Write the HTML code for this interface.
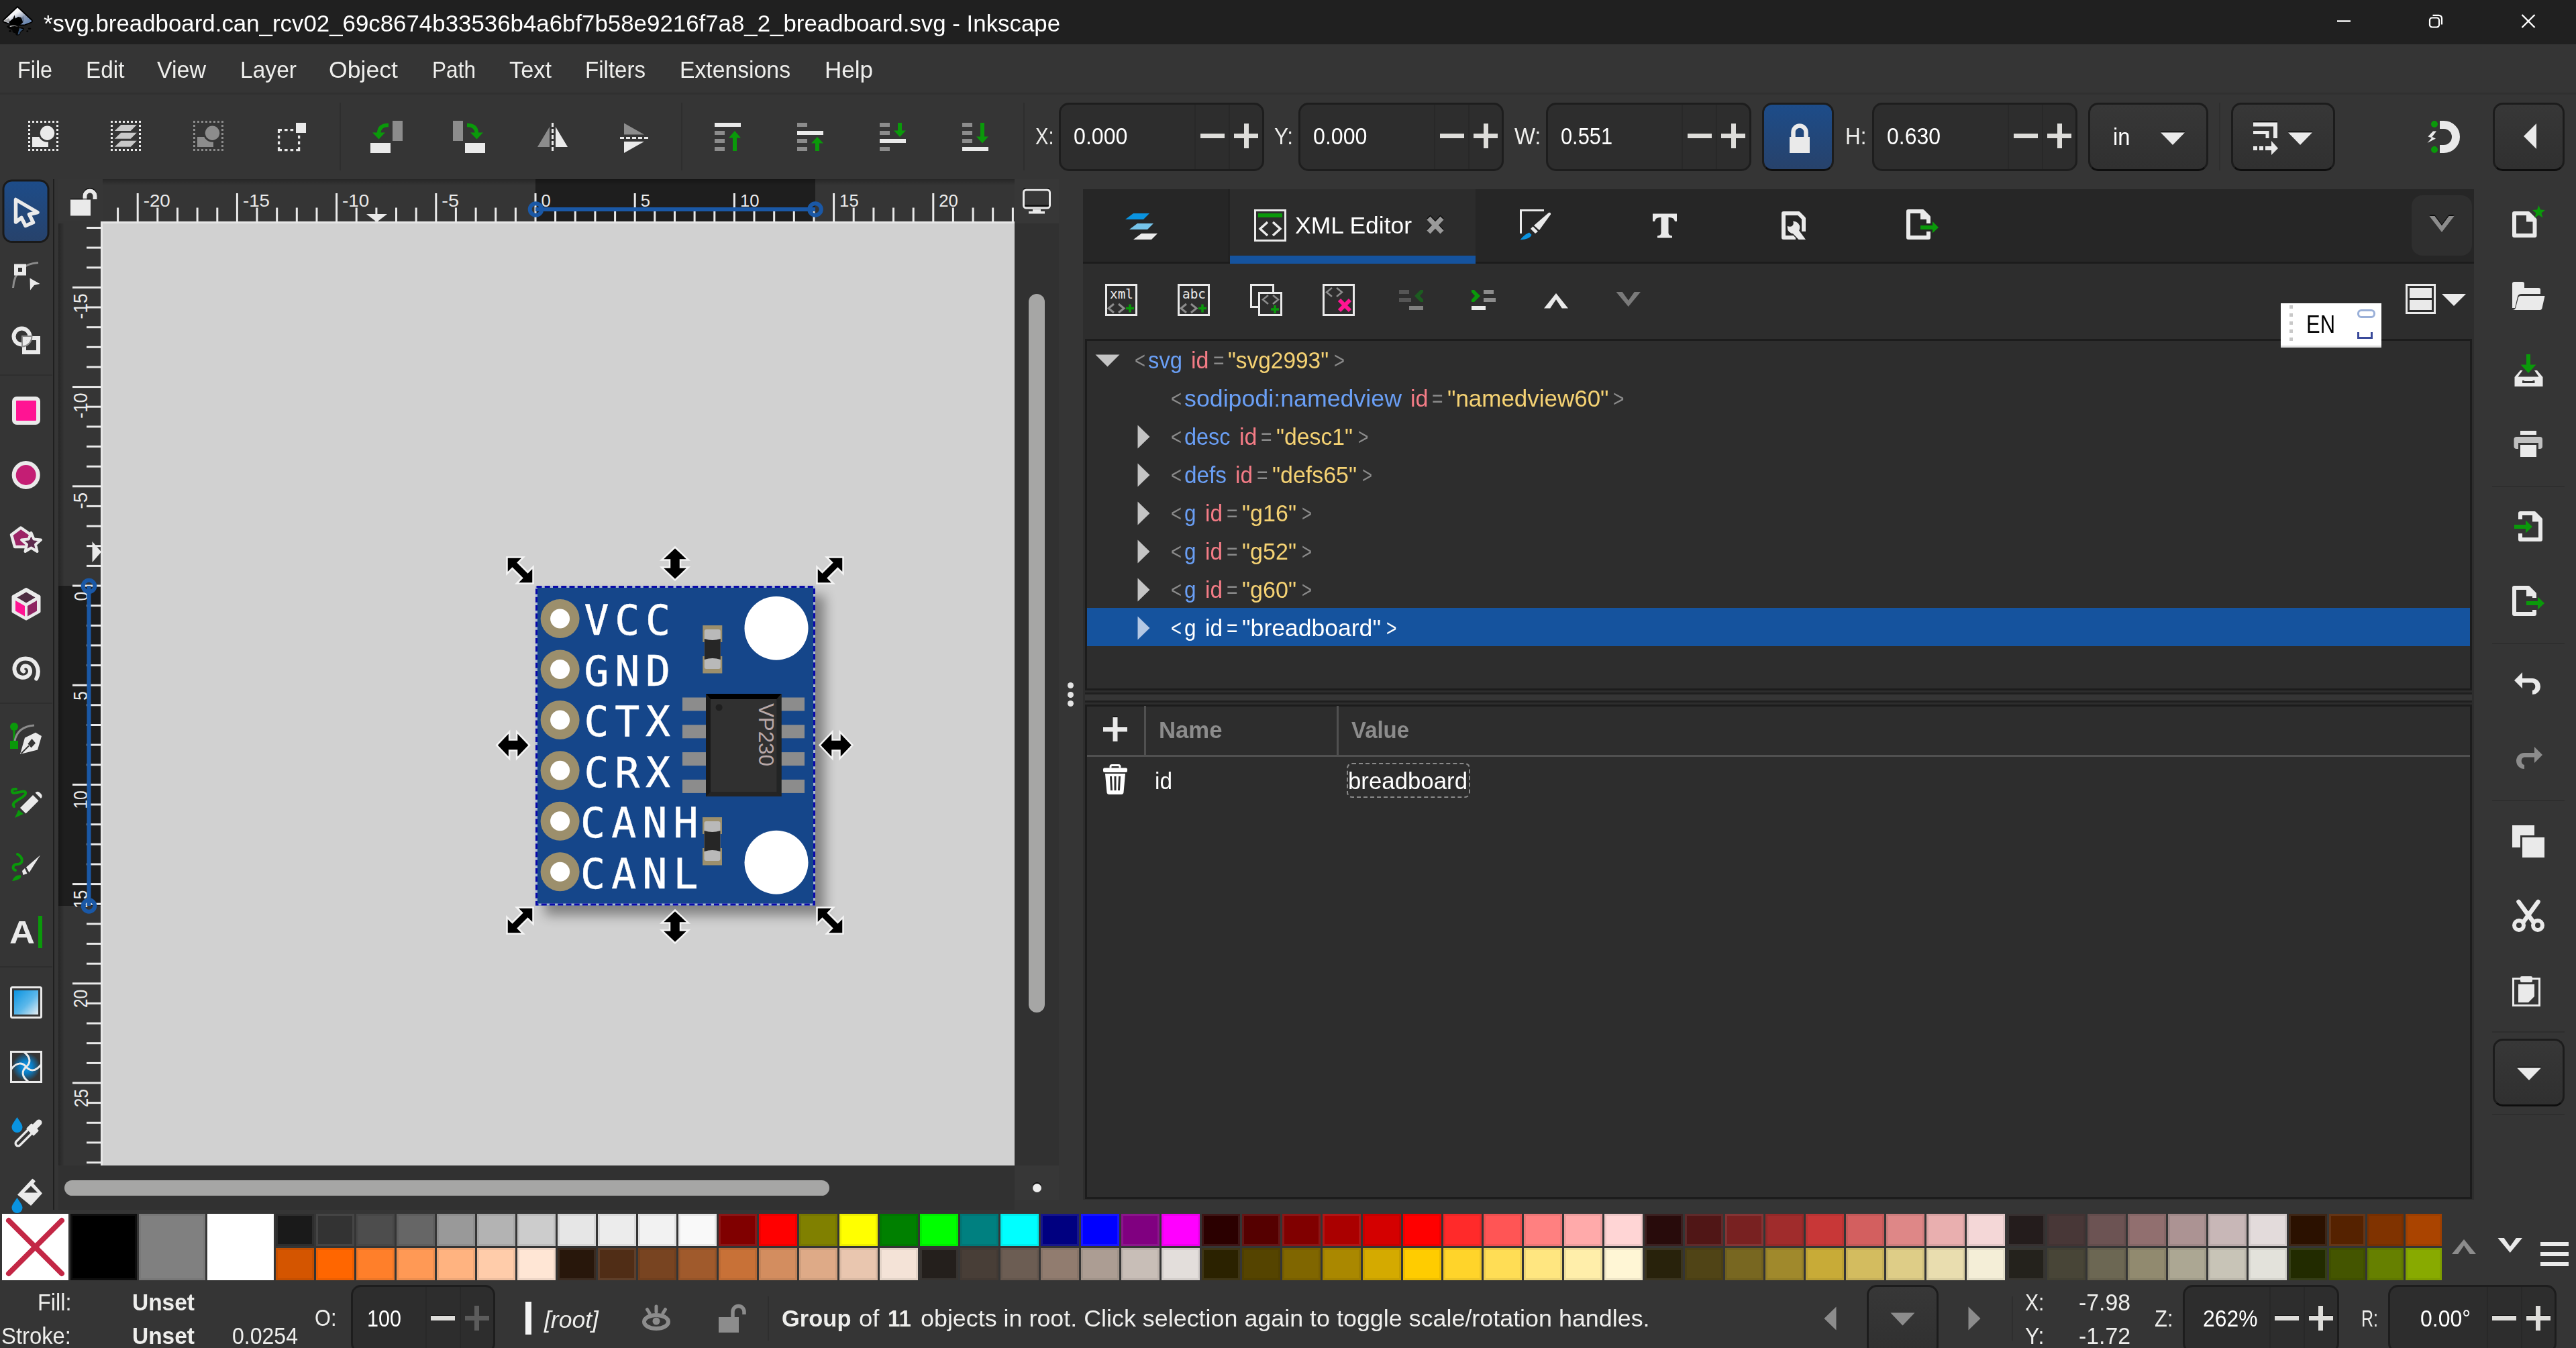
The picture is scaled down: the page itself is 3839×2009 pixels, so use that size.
<!DOCTYPE html>
<html lang="en"><head><meta charset="utf-8"><title>Inkscape</title>
<style>
html,body{margin:0;padding:0;background:#353535;}
#root{position:relative;width:3839px;height:2009px;overflow:hidden;background:#353535;font-family:"Liberation Sans",sans-serif;}
#root div,#root svg,#root span.t{position:absolute;}
#root div{box-sizing:content-box;}
span.t{white-space:pre;line-height:1;transform-origin:0 0;display:block;}
svg{overflow:visible;display:block;}
svg text{font-family:"Liberation Sans",sans-serif;}
svg text.dm{font-family:"DejaVu Sans Mono",monospace;}
</style></head>
<body>
<div id="root">
<div class="window-title" style="left:0;top:0;width:0;height:0;">
<div class="titlebar" style="left:0px;top:0px;width:3839px;height:66px;background:#202020;"><span class="t" style="left:65px;top:17.4px;font-size:35px;color:#ffffff;transform:scaleX(0.9956);">*svg.breadboard.can_rcv02_69c8674b33536b4a6bf7b58e9216f7a8_2_breadboard.svg - Inkscape</span><svg style="left:0px;top:0px;" width="66" height="66" viewBox="0 0 66 66"><defs><linearGradient id="lg1" x1="0.2" y1="0.1" x2="0.9" y2="0.8"><stop offset="0" stop-color="#ffffff"/><stop offset=".35" stop-color="#f4f4f6"/><stop offset=".7" stop-color="#8c9ab4"/><stop offset="1" stop-color="#6a88b4"/></linearGradient><linearGradient id="lg2" x1="0" y1="0" x2="1" y2="0"><stop offset="0" stop-color="#9a9a9a"/><stop offset="1" stop-color="#3a3a3a"/></linearGradient></defs><path d="M26 10 5 30Q3.500 31.800 6 32.800L19 37.500H36L46.500 33.500Q49 32 47.500 30z" fill="url(#lg1)" stroke="#000" stroke-width="1.800" stroke-linejoin="round"/><path d="M5.500 31 13 27 16 33 6.500 32.500z" fill="#8a8a8a" opacity=".7"/><path d="M13 33 19.500 27.500 21.500 22.500 23 27.500 27 25 31.500 26 33 29.500 34.500 33 31 36.500 27 38H17z" fill="#000"/><path d="M33 27 34.500 23 36 31 34 34z" fill="#5a6a86" opacity=".8"/><path d="M10 39.500Q14 36.500 22 37.200 28.500 38 28.500 41 32.500 40 35.500 42 37.500 44.500 33.500 46.300 30 47.500 30.500 49.500 30 52.300 26 52.800 22.800 52.300 23 49.200 19.500 49 18.500 47.500 19.500 45 16 44 12 42.500 10 39.500z" fill="#050505"/><path d="M14 39Q19 37 27 39.500 20 38.500 15.500 40z" fill="#c8c8c8"/><path d="M29 42 35 43.500 31.500 46 29.500 48.500 29 51 26.500 51.500 27.500 47z" fill="#3c5c84" opacity=".9"/><ellipse cx="15" cy="46.500" rx="2" ry="1.400" fill="#050505"/><ellipse cx="40.800" cy="46.600" rx="1.500" ry="1.300" fill="#050505"/><ellipse cx="44" cy="42.800" rx="2.400" ry="1.400" fill="#050505"/></svg><svg style="left:3470px;top:10px;" width="330" height="46" viewBox="0 0 330 46"><path d="M13 21.5H33" stroke="#fff" stroke-width="2.4" fill="none"/><rect x="151" y="16.5" width="14" height="14" rx="3.5" fill="none" stroke="#fff" stroke-width="2.2"/><path d="M155.5 12.8H164.5a4.5 4.5 0 0 1 4.5 4.5V26.5" fill="none" stroke="#fff" stroke-width="2.2"/><path d="M288.5 12L307.5 31M307.5 12L288.5 31" stroke="#fff" stroke-width="2.4" fill="none"/></svg></div>
</div>
<div class="menu" style="left:0;top:0;width:0;height:0;">
<div class="menubar" style="left:0px;top:66px;width:3839px;height:73px;background:#353535;"><span class="t" style="left:26px;top:20.4px;font-size:35px;color:#eeeeec;transform:scaleX(0.9219);">File</span><span class="t" style="left:128px;top:20.4px;font-size:35px;color:#eeeeec;transform:scaleX(0.9534);">Edit</span><span class="t" style="left:234px;top:20.4px;font-size:35px;color:#eeeeec;transform:scaleX(0.9703);">View</span><span class="t" style="left:358px;top:20.4px;font-size:35px;color:#eeeeec;transform:scaleX(0.9593);">Layer</span><span class="t" style="left:490px;top:20.4px;font-size:35px;color:#eeeeec;transform:scaleX(1.0182);">Object</span><span class="t" style="left:644px;top:20.4px;font-size:35px;color:#eeeeec;transform:scaleX(0.9028);">Path</span><span class="t" style="left:759px;top:20.4px;font-size:35px;color:#eeeeec;transform:scaleX(0.9813);">Text</span><span class="t" style="left:872px;top:20.4px;font-size:35px;color:#eeeeec;transform:scaleX(0.9446);">Filters</span><span class="t" style="left:1013px;top:20.4px;font-size:35px;color:#eeeeec;transform:scaleX(0.9637);">Extensions</span><span class="t" style="left:1229px;top:20.4px;font-size:35px;color:#eeeeec;transform:scaleX(1.0002);">Help</span></div>
<div style="left:0px;top:138px;width:3839px;height:3px;background:#303030;"></div>
</div>
<div class="tool-controls" style="left:0;top:0;width:0;height:0;">
<div style="left:506px;top:153px;width:2px;height:101px;background:#2e2e2e;"></div>
<div style="left:1015px;top:153px;width:2px;height:101px;background:#2e2e2e;"></div>
<div style="left:1525px;top:153px;width:2px;height:101px;background:#2e2e2e;"></div>
<div style="left:3307px;top:153px;width:2px;height:101px;background:#2e2e2e;"></div>
<span class="t" style="left:1542.5px;top:184.9px;font-size:35px;color:#eeeeec;transform:scaleX(0.8314);">X:</span>
<div class="spin" style="left:1578px;top:153px;width:300px;height:96px;background:#2d2d2d;border:3px solid #1d1d1d;border-radius:15px;overflow:hidden;"><span class="t" style="left:18.5px;top:28.9px;font-size:35px;color:#ffffff;transform:scaleX(0.9190);">0.000</span><div style="left:199px;top:0px;width:2px;height:96px;background:#282828;"></div><div style="left:250px;top:0px;width:2px;height:96px;background:#282828;"></div><div style="left:207.5px;top:41.5px;width:36px;height:1.5px;background:#0c0c0c;"></div><div style="left:207.5px;top:43.0px;width:36px;height:7px;background:#deddda;"></div><div style="left:272.5px;top:26.5px;width:7px;height:1.5px;background:#0c0c0c;"></div><div style="left:258px;top:41.5px;width:14.5px;height:1.5px;background:#0c0c0c;"></div><div style="left:279.5px;top:41.5px;width:14.5px;height:1.5px;background:#0c0c0c;"></div><div style="left:258px;top:43.0px;width:36px;height:7px;background:#deddda;"></div><div style="left:272.5px;top:28.0px;width:7px;height:37px;background:#deddda;"></div></div>
<span class="t" style="left:1899px;top:184.9px;font-size:35px;color:#eeeeec;transform:scaleX(0.8991);">Y:</span>
<div class="spin" style="left:1935px;top:153px;width:300px;height:96px;background:#2d2d2d;border:3px solid #1d1d1d;border-radius:15px;overflow:hidden;"><span class="t" style="left:18.5px;top:28.9px;font-size:35px;color:#ffffff;transform:scaleX(0.9190);">0.000</span><div style="left:199px;top:0px;width:2px;height:96px;background:#282828;"></div><div style="left:250px;top:0px;width:2px;height:96px;background:#282828;"></div><div style="left:207.5px;top:41.5px;width:36px;height:1.5px;background:#0c0c0c;"></div><div style="left:207.5px;top:43.0px;width:36px;height:7px;background:#deddda;"></div><div style="left:272.5px;top:26.5px;width:7px;height:1.5px;background:#0c0c0c;"></div><div style="left:258px;top:41.5px;width:14.5px;height:1.5px;background:#0c0c0c;"></div><div style="left:279.5px;top:41.5px;width:14.5px;height:1.5px;background:#0c0c0c;"></div><div style="left:258px;top:43.0px;width:36px;height:7px;background:#deddda;"></div><div style="left:272.5px;top:28.0px;width:7px;height:37px;background:#deddda;"></div></div>
<span class="t" style="left:2256.5px;top:184.9px;font-size:35px;color:#eeeeec;transform:scaleX(0.9373);">W:</span>
<div class="spin" style="left:2304px;top:153px;width:300px;height:96px;background:#2d2d2d;border:3px solid #1d1d1d;border-radius:15px;overflow:hidden;"><span class="t" style="left:19px;top:28.9px;font-size:35px;color:#ffffff;transform:scaleX(0.8791);">0.551</span><div style="left:199px;top:0px;width:2px;height:96px;background:#282828;"></div><div style="left:250px;top:0px;width:2px;height:96px;background:#282828;"></div><div style="left:207.5px;top:41.5px;width:36px;height:1.5px;background:#0c0c0c;"></div><div style="left:207.5px;top:43.0px;width:36px;height:7px;background:#deddda;"></div><div style="left:272.5px;top:26.5px;width:7px;height:1.5px;background:#0c0c0c;"></div><div style="left:258px;top:41.5px;width:14.5px;height:1.5px;background:#0c0c0c;"></div><div style="left:279.5px;top:41.5px;width:14.5px;height:1.5px;background:#0c0c0c;"></div><div style="left:258px;top:43.0px;width:36px;height:7px;background:#deddda;"></div><div style="left:272.5px;top:28.0px;width:7px;height:37px;background:#deddda;"></div></div>
<div class="btn" style="left:2625.5px;top:153px;width:101.5px;height:96px;background:linear-gradient(#1d4c89,#27426b);border:3px solid #1c1c1c;border-bottom-color:#0e0e0e;border-radius:15px;"><svg style="left:35px;top:27px;" width="36" height="48" viewBox="0 0 36 48"><path d="M8.5 21V14a9.5 9.5 0 0 1 19 0V21" fill="none" stroke="#eaeaea" stroke-width="6.5"/><rect x="3" y="21" width="30" height="24" fill="#eaeaea"/></svg></div>
<span class="t" style="left:2750px;top:184.9px;font-size:35px;color:#eeeeec;transform:scaleX(0.9000);">H:</span>
<div class="spin" style="left:2790px;top:153px;width:300px;height:96px;background:#2d2d2d;border:3px solid #1d1d1d;border-radius:15px;overflow:hidden;"><span class="t" style="left:19px;top:28.9px;font-size:35px;color:#ffffff;transform:scaleX(0.9133);">0.630</span><div style="left:199px;top:0px;width:2px;height:96px;background:#282828;"></div><div style="left:250px;top:0px;width:2px;height:96px;background:#282828;"></div><div style="left:207.5px;top:41.5px;width:36px;height:1.5px;background:#0c0c0c;"></div><div style="left:207.5px;top:43.0px;width:36px;height:7px;background:#deddda;"></div><div style="left:272.5px;top:26.5px;width:7px;height:1.5px;background:#0c0c0c;"></div><div style="left:258px;top:41.5px;width:14.5px;height:1.5px;background:#0c0c0c;"></div><div style="left:279.5px;top:41.5px;width:14.5px;height:1.5px;background:#0c0c0c;"></div><div style="left:258px;top:43.0px;width:36px;height:7px;background:#deddda;"></div><div style="left:272.5px;top:28.0px;width:7px;height:37px;background:#deddda;"></div></div>
<div class="btn" style="left:3111.5px;top:153px;width:173px;height:96px;background:linear-gradient(#373737,#303030);border:3px solid #1c1c1c;border-bottom-color:#0e0e0e;border-radius:15px;"><span class="t" style="left:34.5px;top:29.9px;font-size:35px;color:#ffffff;transform:scaleX(0.9358);">in</span><svg style="left:104.5px;top:39px;" width="38" height="22" viewBox="0 0 38 22"><path d="M1 1.5H37" stroke="#0c0c0c" stroke-width="1.5"/><path d="M1 2.5H37L19 21z" fill="#eaeaea"/></svg></div>
<div class="btn" style="left:3324.5px;top:153px;width:149px;height:96px;background:linear-gradient(#373737,#303030);border:3px solid #1c1c1c;border-bottom-color:#0e0e0e;border-radius:15px;"><svg style="left:30px;top:24px;" width="40" height="52" viewBox="0 0 40 52"><path d="M0 1.5H36" stroke="#0c0c0c" stroke-width="1.5"/><path d="M0 5.5H33V26" fill="none" stroke="#eaeaea" stroke-width="6"/><path d="M0 17.5H21V26" fill="none" stroke="#eaeaea" stroke-width="5"/><path d="M0 41H6M9 41H15M18 41H28" stroke="#eaeaea" stroke-width="6"/><path d="M27 30 37 41 27 51z" fill="#eaeaea"/></svg><svg style="left:81px;top:39px;" width="38" height="22" viewBox="0 0 38 22"><path d="M1 1.5H37" stroke="#0c0c0c" stroke-width="1.5"/><path d="M1 2.5H37L19 21z" fill="#eaeaea"/></svg></div>
<div class="btn" style="left:3714.5px;top:153px;width:101px;height:96px;background:linear-gradient(#373737,#303030);border:3px solid #1c1c1c;border-bottom-color:#0e0e0e;border-radius:15px;"><svg style="left:42px;top:27px;" width="24" height="42" viewBox="0 0 24 42"><path d="M20 1V39L1 20z" fill="#eaeaea"/></svg></div>
<svg style="left:0;top:141px" width="3839" height="126" viewBox="0 141 3839 126"><rect x="43.5" y="181.5" width="42" height="42" fill="none" stroke="#eaeaea" stroke-width="3" stroke-dasharray="3 3" stroke-dashoffset="1.5"/><rect x="48" y="204" width="24" height="15" fill="#eaeaea"/><circle cx="70.5" cy="198.3" r="13.5" fill="#353535"/><circle cx="70.5" cy="198.3" r="10.700" fill="#eaeaea"/><rect x="166.5" y="181.5" width="42" height="42" fill="none" stroke="#eaeaea" stroke-width="3" stroke-dasharray="3 3" stroke-dashoffset="1.5"/><path d="M180.300 185.9H203.800L194.800 194.9H170.900z" fill="#c8c8c8"/><path d="M180.300 197.8H203.800L194.800 206.8H170.900z" fill="#c8c8c8"/><path d="M180.300 209.8H203.800L194.800 218.8H170.900z" fill="#c8c8c8"/><rect x="289.5" y="181.5" width="42" height="42" fill="none" stroke="#8c8c8c" stroke-width="3" stroke-dasharray="3 3" stroke-dashoffset="1.5"/><rect x="294" y="204" width="24" height="15" fill="#8c8c8c"/><circle cx="316.5" cy="198.3" r="13.5" fill="#353535"/><circle cx="316.5" cy="198.3" r="10.700" fill="#8c8c8c"/><rect x="415.600" y="193.600" width="30" height="30" fill="none" stroke="#eaeaea" stroke-width="3.300" stroke-dasharray="8.800 4 4.600 4 4.600 4" stroke-dashoffset="4.400"/><rect x="438" y="180" width="21" height="21" fill="#353535"/><rect x="441" y="183" width="15" height="15" fill="#eaeaea"/><rect x="585" y="180" width="15" height="30" fill="#8c8c8c"/><rect x="552" y="213" width="30" height="15" fill="#eaeaea"/><path d="M579 186.5Q565 186 564.5 199" fill="none" stroke="#0a990a" stroke-width="5.5"/><path d="M555 197.5H574L564.5 207.5z" fill="#0a990a"/><rect x="675" y="180" width="15" height="30" fill="#8c8c8c"/><rect x="693" y="213" width="30" height="15" fill="#eaeaea"/><path d="M696 186.5Q710 186 710.5 199" fill="none" stroke="#0a990a" stroke-width="5.5"/><path d="M701 197.5H720L710.5 207.5z" fill="#0a990a"/><path d="M801 219H819V189z" fill="#8c8c8c"/><path d="M828 189V219H846z" fill="#eaeaea"/><path d="M823.5 183V225" stroke="#eaeaea" stroke-width="3" stroke-dasharray="6 3"/><path d="M930 183.5V200.5H960z" fill="#8c8c8c"/><path d="M930 211H960L930 228z" fill="#eaeaea"/><path d="M924 205.5H966" stroke="#eaeaea" stroke-width="3" stroke-dasharray="6 3"/><rect x="1065" y="183" width="39" height="6" fill="#eaeaea"/><rect x="1065" y="195" width="15" height="6" fill="#8c8c8c"/><rect x="1065" y="207" width="15" height="6" fill="#8c8c8c"/><rect x="1065" y="219" width="15" height="6" fill="#8c8c8c"/><rect x="1092" y="203" width="6" height="22" fill="#0a990a"/><path d="M1086 205.5H1104L1095 195z" fill="#0a990a"/><rect x="1188" y="183" width="15" height="6" fill="#8c8c8c"/><rect x="1188" y="195" width="39" height="6" fill="#eaeaea"/><rect x="1188" y="207" width="15" height="6" fill="#8c8c8c"/><rect x="1188" y="219" width="15" height="6" fill="#8c8c8c"/><rect x="1215" y="211" width="6" height="14" fill="#0a990a"/><path d="M1209 213.5H1227L1218 204z" fill="#0a990a"/><rect x="1311" y="183" width="15" height="6" fill="#8c8c8c"/><rect x="1311" y="195" width="15" height="6" fill="#8c8c8c"/><rect x="1311" y="207" width="39" height="6" fill="#eaeaea"/><rect x="1311" y="219" width="15" height="6" fill="#8c8c8c"/><rect x="1338" y="183" width="6" height="13" fill="#0a990a"/><path d="M1332 194.5H1350L1341 204z" fill="#0a990a"/><rect x="1434" y="183" width="15" height="6" fill="#8c8c8c"/><rect x="1434" y="195" width="15" height="6" fill="#8c8c8c"/><rect x="1434" y="207" width="15" height="6" fill="#8c8c8c"/><rect x="1434" y="219" width="39" height="6" fill="#eaeaea"/><rect x="1461" y="183" width="6" height="22" fill="#0a990a"/><path d="M1455 203.5H1473L1464 213.5z" fill="#0a990a"/><path d="M3636 186H3642A18 18 0 0 1 3642 222H3636" fill="none" stroke="#eaeaea" stroke-width="12"/><circle cx="3628" cy="185" r="5" fill="#0a990a"/><circle cx="3628" cy="223" r="5" fill="#0a990a"/><path d="M3626 195.5 3618.5 203.5 3624 205.5 3617.5 213 3630 206.5 3624.5 204 3631 195.5z" fill="#eaeaea"/></svg>
</div>
<div class="toolbox" style="left:0;top:0;width:0;height:0;">
<div class="toolbox-bg" style="left:0px;top:267px;width:78px;height:1536px;background:#353535;"></div>
<svg style="left:0;top:267px" width="78" height="1536" viewBox="0 267 78 1536"><defs><linearGradient id="gsel" x1="0" y1="0" x2="0" y2="1"><stop offset="0" stop-color="#1d4c89"/><stop offset="1" stop-color="#27426b"/></linearGradient><linearGradient id="ggrad" x1="0" y1="0" x2="1" y2="1"><stop offset="0" stop-color="#0a93e0"/><stop offset=".55" stop-color="#5cb8ea"/><stop offset="1" stop-color="#e8eef2"/></linearGradient><radialGradient id="gmesh"><stop offset="0" stop-color="#1aa0ee"/><stop offset=".45" stop-color="#0a7cc4"/><stop offset="1" stop-color="#0a7cc4" stop-opacity="0"/></radialGradient></defs><rect x="5" y="269" width="67" height="91.5" rx="13" fill="url(#gsel)" stroke="#1a1a1a" stroke-width="3"/><path d="M23.5 297.5V331L32 324.5 38 336.5 49.5 331.5 43.5 319.5 56 316.5z" fill="none" stroke="#eaeaea" stroke-width="5.5" stroke-linejoin="round"/><path d="M57 391.5Q22 394 19.5 429" fill="none" stroke="#8c8c8c" stroke-width="3"/><rect x="21" y="393.5" width="18" height="17" fill="#eaeaea"/><rect x="27" y="399" width="6" height="6" fill="#353535"/><path d="M44.5 414.5 59.5 423 51 425 45 432.5z" fill="#eaeaea"/><rect x="36" y="504" width="21" height="21" fill="none" stroke="#eaeaea" stroke-width="6"/><circle cx="32.5" cy="501.5" r="12" fill="none" stroke="#eaeaea" stroke-width="6"/><path d="M36 504H45A12.5 12.5 0 0 1 36 514z" fill="#353535" opacity=".0"/><path d="M33 501H47.5A15 15 0 0 1 33 516.5z" fill="none" stroke="#8c8c8c" stroke-width="2"/><rect x="0" y="558" width="78" height="2" fill="#2e2e2e"/><rect x="0" y="1047" width="78" height="2" fill="#2e2e2e"/><rect x="0" y="1440" width="78" height="2" fill="#2e2e2e"/><rect x="21" y="594" width="36" height="36" rx="4" fill="#ff1493" stroke="#eaeaea" stroke-width="6"/><circle cx="38.7" cy="708" r="18" fill="#c41e74" stroke="#eaeaea" stroke-width="6"/><path d="M31 786.5 17 797 22 815H39L46 797z" fill="#9c2466" stroke="#eaeaea" stroke-width="4.5" stroke-linejoin="round"/><path d="M46.5 794 50.5 803.5 61 804.5 53 811.5 55.5 822 46.5 816.5 37.5 822 40 811.5 32 804.5 42.500 803.5z" fill="#5c2a4c" stroke="#eaeaea" stroke-width="4" stroke-linejoin="round"/><path d="M39 878 58.500 889V911.500L39 922.500 19.500 911.500V889z" fill="#eaeaea" stroke="#eaeaea" stroke-width="4" stroke-linejoin="round"/><path d="M39 882.500 52.500 890.500 39 898.500 25.500 890.500z" fill="#4e2c42"/><path d="M23 895 37 903V918.500L23 910.500z" fill="#ff1493"/><path d="M55 895 41 903V918.500L55 910.500z" fill="#8e2462"/><path d="M53 1010C60 996 52 980 37 980 25 980 18 990 21 1000 24 1009 36 1011 42 1004 46 999 43 991 37 991 32 991 30 997 34 999" fill="none" stroke="#eaeaea" stroke-width="6" stroke-linecap="round" transform="translate(1.200,1.500)"/><circle cx="21" cy="1083" r="6" fill="#0a990a"/><rect x="19.5" y="1083" width="3" height="24" fill="#0a990a"/><rect x="15" y="1104" width="12" height="12" fill="#0a990a"/><path d="M22 1104Q26 1083 51 1081" fill="none" stroke="#8c8c8c" stroke-width="3"/><path d="M30 1124 37 1099.500 53 1091.800 62 1097 56 1117.500z" fill="#eaeaea"/><path d="M47.500 1101 53 1107.500 46.500 1114.500 41.500 1108.500z" fill="#353535"/><path d="M43 1111.500 31.500 1123" stroke="#353535" stroke-width="2"/><path d="M21 1202C14 1195 36 1190 38 1183 40 1174 20 1186 18 1180 17 1175 24 1176 24 1176" fill="none" stroke="#0a990a" stroke-width="4" stroke-linecap="round"/><path d="M22 1219 27.500 1207 35 1213z" fill="#0a990a"/><path d="M30 1204 50 1184 58.500 1192.500 38.500 1212.500z" fill="#eaeaea"/><path d="M52.500 1181.500Q56 1178 59.500 1181.500L61.500 1183.500Q64 1187 61 1190z" fill="#eaeaea"/><path d="M49 1183 59.500 1193.500" stroke="#353535" stroke-width="2.500"/><path d="M26 1273C36 1279 34 1288 26 1288 18 1288 18 1296 23 1297" fill="none" stroke="#0a990a" stroke-width="4" stroke-linecap="round"/><path d="M18 1313Q22 1303 31 1304.500 33 1311 18 1313z" fill="#0a990a"/><path d="M33 1298 37 1294 40.500 1302 34.500 1304z" fill="#eaeaea"/><path d="M39 1292.500 60 1274.500 43.500 1300.500z" fill="#eaeaea"/><rect x="57" y="1365" width="6" height="48" fill="#0a990a"/><rect x="16.5" y="1471.500" width="45" height="45" rx="2" fill="#353535" stroke="#eaeaea" stroke-width="3"/><rect x="21" y="1476" width="36" height="36" fill="url(#ggrad)"/><rect x="16.5" y="1567.500" width="45" height="45" fill="#353535" stroke="#eaeaea" stroke-width="3"/><circle cx="39" cy="1590" r="21" fill="url(#gmesh)"/><path d="M36 1568C46 1576 46 1584 39 1590 32 1596 32 1604 42 1612M17 1593C25 1583 33 1583 39 1590 45 1597 53 1597 61 1587" fill="none" stroke="#eaeaea" stroke-width="3"/><path d="M25.500 1665C30 1672 33.500 1676 33.500 1680A8 8 0 0 1 17.500 1680C17.500 1676 21 1672 25.500 1665z" fill="#0a93e0"/><path d="M27 1704 49 1682" stroke="#eaeaea" stroke-width="11" stroke-linecap="round"/><path d="M27 1704 47 1684" stroke="#353535" stroke-width="4.500" stroke-linecap="round"/><path d="M41 1682 47 1676 56 1685 50 1691z" fill="#eaeaea" stroke="#eaeaea" stroke-width="3" stroke-linejoin="round"/><path d="M50 1681 58 1673" stroke="#eaeaea" stroke-width="9" stroke-linecap="round"/><path d="M27 1780.500 48.500 1757.500 52 1760.500 49 1764 62 1778.500 46 1796z" fill="#eaeaea" stroke="#eaeaea" stroke-width="1.500" stroke-linejoin="round"/><path d="M36 1777.500H56L46 1767.500z" fill="#353535"/><path d="M25.500 1785C30 1792 33.500 1796 33.500 1800A8 8 0 0 1 17.500 1800C17.500 1796 21 1792 25.500 1785z" fill="#0a93e0"/></svg>
<span class="t" style="left:14px;top:1366.4px;font-size:48px;color:#eaeaea;font-weight:bold;transform:scaleX(1.0960);">A</span>
</div>
<div class="canvas-area" style="left:0;top:0;width:0;height:0;">
<div style="left:78px;top:267px;width:2.5px;height:1536px;background:#1f1f1f;left:78.5px;"></div>
<div style="left:87px;top:267px;width:66px;height:63px;background:#363636;"></div><svg style="left:87px;top:267px" width="66" height="66" viewBox="87 267 66 66"><path d="M126.500 300V292A7.500 7.500 0 0 1 141.500 292V297" fill="none" stroke="#0c0c0c" stroke-width="6" transform="translate(0,-1.5)"/><path d="M126.500 300V292A7.500 7.500 0 0 1 141.500 292V297" fill="none" stroke="#eaeaea" stroke-width="6"/><rect x="105" y="296" width="30" height="1.500" fill="#0c0c0c"/><rect x="105" y="297.500" width="30" height="24" fill="#eaeaea"/></svg>
<div style="left:153px;top:267px;width:1359px;height:66px;background:#353535;"></div>
<svg class="ruler" style="left:153px;top:267px" width="1359" height="66" viewBox="153 267 1359 66"><rect x="798" y="267" width="417" height="63" fill="#1e1e1e"/><rect x="174.1" y="309.5" width="3" height="20.5" fill="#eaeaea"/><rect x="203.7" y="288" width="3" height="42" fill="#eaeaea"/><text x="213.7" y="308" font-size="26" fill="#eaeaea" textLength="40.1" lengthAdjust="spacingAndGlyphs">-20</text><rect x="233.3" y="309.5" width="3" height="20.5" fill="#eaeaea"/><rect x="263.0" y="309.5" width="3" height="20.5" fill="#eaeaea"/><rect x="292.6" y="309.5" width="3" height="20.5" fill="#eaeaea"/><rect x="322.3" y="309.5" width="3" height="20.5" fill="#eaeaea"/><rect x="351.9" y="288" width="3" height="42" fill="#eaeaea"/><text x="361.9" y="308" font-size="26" fill="#eaeaea" textLength="40.1" lengthAdjust="spacingAndGlyphs">-15</text><rect x="381.5" y="309.5" width="3" height="20.5" fill="#eaeaea"/><rect x="411.2" y="309.5" width="3" height="20.5" fill="#eaeaea"/><rect x="440.8" y="309.5" width="3" height="20.5" fill="#eaeaea"/><rect x="470.5" y="309.5" width="3" height="20.5" fill="#eaeaea"/><rect x="500.1" y="288" width="3" height="42" fill="#eaeaea"/><text x="510.1" y="308" font-size="26" fill="#eaeaea" textLength="40.1" lengthAdjust="spacingAndGlyphs">-10</text><rect x="529.7" y="309.5" width="3" height="20.5" fill="#eaeaea"/><rect x="559.4" y="309.5" width="3" height="20.5" fill="#eaeaea"/><rect x="589.0" y="309.5" width="3" height="20.5" fill="#eaeaea"/><rect x="618.7" y="309.5" width="3" height="20.5" fill="#eaeaea"/><rect x="648.3" y="288" width="3" height="42" fill="#eaeaea"/><text x="658.3" y="308" font-size="26" fill="#eaeaea" textLength="25.8" lengthAdjust="spacingAndGlyphs">-5</text><rect x="677.9" y="309.5" width="3" height="20.5" fill="#eaeaea"/><rect x="707.6" y="309.5" width="3" height="20.5" fill="#eaeaea"/><rect x="737.2" y="309.5" width="3" height="20.5" fill="#eaeaea"/><rect x="766.9" y="309.5" width="3" height="20.5" fill="#eaeaea"/><rect x="796.5" y="288" width="3" height="42" fill="#eaeaea"/><text x="806.5" y="308" font-size="26" fill="#eaeaea" textLength="14.3" lengthAdjust="spacingAndGlyphs">0</text><rect x="826.1" y="309.5" width="3" height="20.5" fill="#eaeaea"/><rect x="855.8" y="309.5" width="3" height="20.5" fill="#eaeaea"/><rect x="885.4" y="309.5" width="3" height="20.5" fill="#eaeaea"/><rect x="915.1" y="309.5" width="3" height="20.5" fill="#eaeaea"/><rect x="944.7" y="288" width="3" height="42" fill="#eaeaea"/><text x="954.7" y="308" font-size="26" fill="#eaeaea" textLength="14.3" lengthAdjust="spacingAndGlyphs">5</text><rect x="974.3" y="309.5" width="3" height="20.5" fill="#eaeaea"/><rect x="1004.0" y="309.5" width="3" height="20.5" fill="#eaeaea"/><rect x="1033.6" y="309.5" width="3" height="20.5" fill="#eaeaea"/><rect x="1063.3" y="309.5" width="3" height="20.5" fill="#eaeaea"/><rect x="1092.9" y="288" width="3" height="42" fill="#eaeaea"/><text x="1102.9" y="308" font-size="26" fill="#eaeaea" textLength="28.6" lengthAdjust="spacingAndGlyphs">10</text><rect x="1122.5" y="309.5" width="3" height="20.5" fill="#eaeaea"/><rect x="1152.2" y="309.5" width="3" height="20.5" fill="#eaeaea"/><rect x="1181.8" y="309.5" width="3" height="20.5" fill="#eaeaea"/><rect x="1211.5" y="309.5" width="3" height="20.5" fill="#eaeaea"/><rect x="1241.1" y="288" width="3" height="42" fill="#eaeaea"/><text x="1251.1" y="308" font-size="26" fill="#eaeaea" textLength="28.6" lengthAdjust="spacingAndGlyphs">15</text><rect x="1270.7" y="309.5" width="3" height="20.5" fill="#eaeaea"/><rect x="1300.4" y="309.5" width="3" height="20.5" fill="#eaeaea"/><rect x="1330.0" y="309.5" width="3" height="20.5" fill="#eaeaea"/><rect x="1359.7" y="309.5" width="3" height="20.5" fill="#eaeaea"/><rect x="1389.3" y="288" width="3" height="42" fill="#eaeaea"/><text x="1399.3" y="308" font-size="26" fill="#eaeaea" textLength="28.6" lengthAdjust="spacingAndGlyphs">20</text><rect x="1418.9" y="309.5" width="3" height="20.5" fill="#eaeaea"/><rect x="1448.6" y="309.5" width="3" height="20.5" fill="#eaeaea"/><rect x="1478.2" y="309.5" width="3" height="20.5" fill="#eaeaea"/><rect x="1507.9" y="309.5" width="3" height="20.5" fill="#eaeaea"/><rect x="153" y="330" width="1359" height="3" fill="#e6e6e6"/><path d="M546 319H577L561.500 331z" fill="#eaeaea"/><rect x="798" y="309" width="417" height="6" fill="#1a58a6"/><circle cx="798.5" cy="312" r="8.800" fill="none" stroke="#1a58a6" stroke-width="6"/><circle cx="1215" cy="312" r="8.800" fill="none" stroke="#1a58a6" stroke-width="6"/></svg>
<div style="left:87px;top:333px;width:66px;height:1404px;background:#353535;"></div>
<svg class="ruler" style="left:87px;top:330px" width="66" height="1407" viewBox="87 330 66 1407"><rect x="87" y="873" width="63" height="477" fill="#1e1e1e"/><rect x="129" y="338.0" width="21" height="3" fill="#eaeaea"/><rect x="129" y="367.6" width="21" height="3" fill="#eaeaea"/><rect x="129" y="397.3" width="21" height="3" fill="#eaeaea"/><rect x="108" y="426.9" width="42" height="3" fill="#eaeaea"/><text x="130.5" y="437.4" font-size="29" fill="#eaeaea" text-anchor="end" textLength="38.2" lengthAdjust="spacingAndGlyphs" transform="rotate(-90 130.5 437.4)">-15</text><rect x="129" y="456.5" width="21" height="3" fill="#eaeaea"/><rect x="129" y="486.2" width="21" height="3" fill="#eaeaea"/><rect x="129" y="515.8" width="21" height="3" fill="#eaeaea"/><rect x="129" y="545.5" width="21" height="3" fill="#eaeaea"/><rect x="108" y="575.1" width="42" height="3" fill="#eaeaea"/><text x="130.5" y="585.6" font-size="29" fill="#eaeaea" text-anchor="end" textLength="38.2" lengthAdjust="spacingAndGlyphs" transform="rotate(-90 130.5 585.6)">-10</text><rect x="129" y="604.7" width="21" height="3" fill="#eaeaea"/><rect x="129" y="634.4" width="21" height="3" fill="#eaeaea"/><rect x="129" y="664.0" width="21" height="3" fill="#eaeaea"/><rect x="129" y="693.7" width="21" height="3" fill="#eaeaea"/><rect x="108" y="723.3" width="42" height="3" fill="#eaeaea"/><text x="130.5" y="733.8" font-size="29" fill="#eaeaea" text-anchor="end" textLength="24.6" lengthAdjust="spacingAndGlyphs" transform="rotate(-90 130.5 733.8)">-5</text><rect x="129" y="752.9" width="21" height="3" fill="#eaeaea"/><rect x="129" y="782.6" width="21" height="3" fill="#eaeaea"/><rect x="129" y="812.2" width="21" height="3" fill="#eaeaea"/><rect x="129" y="841.9" width="21" height="3" fill="#eaeaea"/><rect x="108" y="871.5" width="42" height="3" fill="#eaeaea"/><text x="130.5" y="882.0" font-size="29" fill="#eaeaea" text-anchor="end" textLength="13.6" lengthAdjust="spacingAndGlyphs" transform="rotate(-90 130.5 882.0)">0</text><rect x="129" y="901.1" width="21" height="3" fill="#eaeaea"/><rect x="129" y="930.8" width="21" height="3" fill="#eaeaea"/><rect x="129" y="960.4" width="21" height="3" fill="#eaeaea"/><rect x="129" y="990.1" width="21" height="3" fill="#eaeaea"/><rect x="108" y="1019.7" width="42" height="3" fill="#eaeaea"/><text x="130.5" y="1030.2" font-size="29" fill="#eaeaea" text-anchor="end" textLength="13.6" lengthAdjust="spacingAndGlyphs" transform="rotate(-90 130.5 1030.2)">5</text><rect x="129" y="1049.3" width="21" height="3" fill="#eaeaea"/><rect x="129" y="1079.0" width="21" height="3" fill="#eaeaea"/><rect x="129" y="1108.6" width="21" height="3" fill="#eaeaea"/><rect x="129" y="1138.3" width="21" height="3" fill="#eaeaea"/><rect x="108" y="1167.9" width="42" height="3" fill="#eaeaea"/><text x="130.5" y="1178.4" font-size="29" fill="#eaeaea" text-anchor="end" textLength="27.2" lengthAdjust="spacingAndGlyphs" transform="rotate(-90 130.5 1178.4)">10</text><rect x="129" y="1197.5" width="21" height="3" fill="#eaeaea"/><rect x="129" y="1227.2" width="21" height="3" fill="#eaeaea"/><rect x="129" y="1256.8" width="21" height="3" fill="#eaeaea"/><rect x="129" y="1286.5" width="21" height="3" fill="#eaeaea"/><rect x="108" y="1316.1" width="42" height="3" fill="#eaeaea"/><text x="130.5" y="1326.6" font-size="29" fill="#eaeaea" text-anchor="end" textLength="27.2" lengthAdjust="spacingAndGlyphs" transform="rotate(-90 130.5 1326.6)">15</text><rect x="129" y="1345.7" width="21" height="3" fill="#eaeaea"/><rect x="129" y="1375.4" width="21" height="3" fill="#eaeaea"/><rect x="129" y="1405.0" width="21" height="3" fill="#eaeaea"/><rect x="129" y="1434.7" width="21" height="3" fill="#eaeaea"/><rect x="108" y="1464.3" width="42" height="3" fill="#eaeaea"/><text x="130.5" y="1474.8" font-size="29" fill="#eaeaea" text-anchor="end" textLength="27.2" lengthAdjust="spacingAndGlyphs" transform="rotate(-90 130.5 1474.8)">20</text><rect x="129" y="1493.9" width="21" height="3" fill="#eaeaea"/><rect x="129" y="1523.6" width="21" height="3" fill="#eaeaea"/><rect x="129" y="1553.2" width="21" height="3" fill="#eaeaea"/><rect x="129" y="1582.9" width="21" height="3" fill="#eaeaea"/><rect x="108" y="1612.5" width="42" height="3" fill="#eaeaea"/><text x="130.5" y="1623.0" font-size="29" fill="#eaeaea" text-anchor="end" textLength="27.2" lengthAdjust="spacingAndGlyphs" transform="rotate(-90 130.5 1623.0)">25</text><rect x="129" y="1642.1" width="21" height="3" fill="#eaeaea"/><rect x="129" y="1671.8" width="21" height="3" fill="#eaeaea"/><rect x="129" y="1701.4" width="21" height="3" fill="#eaeaea"/><rect x="129" y="1731.1" width="21" height="3" fill="#eaeaea"/><rect x="150" y="330" width="3" height="1407" fill="#e6e6e6"/><path d="M137.500 807V838L151 822.500z" fill="#eaeaea"/><rect x="129.500" y="873" width="6" height="477" fill="#1a58a6"/><circle cx="132.5" cy="873.5" r="8.800" fill="none" stroke="#1a58a6" stroke-width="6"/><circle cx="132.5" cy="1350" r="8.800" fill="none" stroke="#1a58a6" stroke-width="6"/></svg>
<div style="left:153px;top:267px;width:1359px;height:9px;background:linear-gradient(rgba(0,0,0,.28),rgba(0,0,0,0));"></div>
<div style="left:87px;top:333px;width:9px;height:1404px;background:linear-gradient(90deg,rgba(0,0,0,.28),rgba(0,0,0,0));"></div>
<div class="canvas" style="left:153px;top:333px;width:1359px;height:1404px;background:#d1d1d1;"></div>
<svg style="left:153px;top:333px" width="1359" height="1403" viewBox="153 333 1359 1403"><defs><filter id="sh" x="-20%" y="-20%" width="150%" height="150%"><feGaussianBlur stdDeviation="9"/></filter></defs><rect x="812" y="887" width="417" height="477" fill="#000" opacity=".38" filter="url(#sh)"/><rect x="798" y="873" width="417" height="476.500" fill="#15468a"/><circle cx="834.6" cy="922.0" r="29" fill="#9c8f6c"/><circle cx="834.6" cy="922.0" r="14.500" fill="#fff"/><circle cx="834.6" cy="997.5" r="29" fill="#9c8f6c"/><circle cx="834.6" cy="997.5" r="14.500" fill="#fff"/><circle cx="834.6" cy="1072.9" r="29" fill="#9c8f6c"/><circle cx="834.6" cy="1072.9" r="14.500" fill="#fff"/><circle cx="834.6" cy="1148.3" r="29" fill="#9c8f6c"/><circle cx="834.6" cy="1148.3" r="14.500" fill="#fff"/><circle cx="834.6" cy="1223.8" r="29" fill="#9c8f6c"/><circle cx="834.6" cy="1223.8" r="14.500" fill="#fff"/><circle cx="834.6" cy="1299.2" r="29" fill="#9c8f6c"/><circle cx="834.6" cy="1299.2" r="14.500" fill="#fff"/><circle cx="1157" cy="936.2" r="47.500" fill="#fff"/><circle cx="1157" cy="1285.2" r="47.500" fill="#fff"/><text x="870.5" y="946.3" class="dm" font-size="61.5" fill="#fff" stroke="#fff" stroke-width="0.500" textLength="128.5" lengthAdjust="spacing">VCC</text><text x="870.5" y="1021.8" class="dm" font-size="61.5" fill="#fff" stroke="#fff" stroke-width="0.500" textLength="128.5" lengthAdjust="spacing">GND</text><text x="870.5" y="1097.3" class="dm" font-size="61.5" fill="#fff" stroke="#fff" stroke-width="0.500" textLength="128.5" lengthAdjust="spacing">CTX</text><text x="870.5" y="1172.8" class="dm" font-size="61.5" fill="#fff" stroke="#fff" stroke-width="0.500" textLength="128.5" lengthAdjust="spacing">CRX</text><text x="865.0" y="1248.2" class="dm" font-size="61.5" fill="#fff" stroke="#fff" stroke-width="0.500" textLength="175.5" lengthAdjust="spacing">CANH</text><text x="865.0" y="1323.7" class="dm" font-size="61.5" fill="#fff" stroke="#fff" stroke-width="0.500" textLength="175.5" lengthAdjust="spacing">CANL</text><rect x="1047.3" y="932" width="29" height="25" fill="#9c8f6c"/><rect x="1047.3" y="978" width="29" height="25.5" fill="#9c8f6c"/><rect x="1049.8" y="938" width="24" height="59" rx="3" fill="#b9b9b9"/><path d="M1049.8 952Q1061.8 956 1073.8 952V983Q1061.8 979 1049.8 983z" fill="#262626"/><rect x="1047" y="1218" width="29" height="25" fill="#9c8f6c"/><rect x="1047" y="1264" width="29" height="25.5" fill="#9c8f6c"/><rect x="1049.5" y="1224" width="24" height="59" rx="3" fill="#b9b9b9"/><path d="M1049.5 1238Q1061.5 1242 1073.5 1238V1269Q1061.5 1265 1049.5 1269z" fill="#262626"/><rect x="1017" y="1039.5" width="36" height="20" fill="#8c8c8c"/><rect x="1163" y="1039.5" width="36" height="20" fill="#8c8c8c"/><rect x="1017" y="1080.3" width="36" height="20" fill="#8c8c8c"/><rect x="1163" y="1080.3" width="36" height="20" fill="#8c8c8c"/><rect x="1017" y="1121.1" width="36" height="20" fill="#8c8c8c"/><rect x="1163" y="1121.1" width="36" height="20" fill="#8c8c8c"/><rect x="1017" y="1161.9" width="36" height="20" fill="#8c8c8c"/><rect x="1163" y="1161.9" width="36" height="20" fill="#8c8c8c"/><rect x="1052" y="1034" width="112.500" height="153" fill="#1c1c1c"/><path d="M1052 1034H1164.500L1157.500 1042H1059z" fill="#000"/><path d="M1164.500 1034V1187L1157.500 1180V1042z" fill="#222424"/><path d="M1052 1187H1164.500L1157.500 1180H1059z" fill="#242424"/><path d="M1052 1034V1187L1059 1180V1042z" fill="#1a1a1a"/><rect x="1059" y="1042" width="98.500" height="138" fill="#303030"/><circle cx="1071.6" cy="1054.4" r="5" fill="#1f1f1f"/><text x="1131" y="1048" font-size="31.500" fill="#b8a8a8" textLength="94" lengthAdjust="spacing" transform="rotate(90 1131 1048)">VP230</text><rect x="799.500" y="874.500" width="414" height="473.500" fill="none" stroke="#aab8d4" stroke-width="3"/><rect x="799.500" y="874.500" width="414" height="473.500" fill="none" stroke="#0a0aaa" stroke-width="3" stroke-dasharray="8 4.250"/><path d="M0 -24.500 20 -5.500H8V5.500H20L0 24.500 -20 5.500H-8V-5.500H-20z" transform="translate(1006 840) rotate(0) scale(1.0)" fill="#000" stroke="#f4f4f4" stroke-width="2.500" stroke-linejoin="miter"/><path d="M0 -24.500 20 -5.500H8V5.500H20L0 24.500 -20 5.500H-8V-5.500H-20z" transform="translate(1006 1381) rotate(0) scale(1.0)" fill="#000" stroke="#f4f4f4" stroke-width="2.500" stroke-linejoin="miter"/><path d="M0 -24.500 20 -5.500H8V5.500H20L0 24.500 -20 5.500H-8V-5.500H-20z" transform="translate(764.6 1110.6) rotate(90) scale(1.0)" fill="#000" stroke="#f4f4f4" stroke-width="2.500" stroke-linejoin="miter"/><path d="M0 -24.500 20 -5.500H8V5.500H20L0 24.500 -20 5.500H-8V-5.500H-20z" transform="translate(1246 1110.6) rotate(90) scale(1.0)" fill="#000" stroke="#f4f4f4" stroke-width="2.500" stroke-linejoin="miter"/><path d="M-19.500 -19.500H5L-3 -11.500 11.500 3 19.500 -5V19.500H-5L3 11.500 -11.500 -3 -19.500 5z" transform="translate(775 850) rotate(0)" fill="#000" stroke="#f4f4f4" stroke-width="2.500" stroke-linejoin="miter"/><path d="M-19.500 -19.500H5L-3 -11.500 11.500 3 19.500 -5V19.500H-5L3 11.500 -11.500 -3 -19.500 5z" transform="translate(1237 1372) rotate(0)" fill="#000" stroke="#f4f4f4" stroke-width="2.500" stroke-linejoin="miter"/><path d="M-19.500 -19.500H5L-3 -11.500 11.500 3 19.500 -5V19.500H-5L3 11.500 -11.500 -3 -19.500 5z" transform="translate(1237 850) rotate(90)" fill="#000" stroke="#f4f4f4" stroke-width="2.500" stroke-linejoin="miter"/><path d="M-19.500 -19.500H5L-3 -11.500 11.500 3 19.500 -5V19.500H-5L3 11.500 -11.500 -3 -19.500 5z" transform="translate(775 1372) rotate(90)" fill="#000" stroke="#f4f4f4" stroke-width="2.500" stroke-linejoin="miter"/></svg>
<div style="left:1512px;top:267px;width:66px;height:66px;background:#373737;"></div>
<svg style="left:1521px;top:277px;" width="48" height="44" viewBox="0 0 48 44"><rect x="4.500" y="3" width="39" height="1.500" fill="#0c0c0c"/><rect x="4.500" y="6" width="39" height="27" rx="4" fill="none" stroke="#eaeaea" stroke-width="3"/><rect x="6" y="28.500" width="36" height="2" fill="#0c0c0c"/><rect x="18" y="35" width="12" height="4" fill="#eaeaea"/><rect x="12" y="38" width="24" height="3.500" fill="#eaeaea"/></svg>
<div style="left:1512px;top:333px;width:66px;height:1404px;background:#313131;"></div>
<div style="left:87px;top:1737px;width:1425px;height:66px;background:#313131;"></div>
<div style="left:1533px;top:438px;width:24px;height:1071px;background:#a6a6a5;border-radius:12px;"></div>
<div style="left:1512px;top:1737px;width:66px;height:50.5px;background:#373737;"></div>
<div style="left:1538.5px;top:1761.5px;width:13px;height:13px;background:#0c0c0c;border-radius:6.500px;"></div>
<div style="left:1538.5px;top:1763.5px;width:13px;height:13px;background:#eeeeee;border-radius:6.500px;"></div>
<div style="left:96px;top:1758.5px;width:1140px;height:23px;background:#a6a6a5;border-radius:11.500px;"></div>
<div style="left:1591px;top:1017.0px;width:9px;height:9px;background:#e4e4e4;border-radius:4.500px;"></div>
<div style="left:1591px;top:1030.5px;width:9px;height:9px;background:#e4e4e4;border-radius:4.500px;"></div>
<div style="left:1591px;top:1044.0px;width:9px;height:9px;background:#e4e4e4;border-radius:4.500px;"></div>
</div>
<div class="dock-xml-editor" style="left:0;top:0;width:0;height:0;">
<div class="dock" style="left:1614px;top:282px;width:2073px;height:1505.5px;background:#2d2d2d;"></div>
<div style="left:1614px;top:282px;width:2073px;height:108px;background:#262626;"></div>
<div style="left:1614px;top:390px;width:2073px;height:3px;background:#1c1c1c;"></div>
<div style="left:1830px;top:282px;width:3px;height:108px;background:#222222;"></div>
<div style="left:1833px;top:282px;width:366px;height:108px;background:#2c2c2c;"></div>
<div style="left:1833px;top:381px;width:366px;height:12px;background:#15539e;"></div>
<div style="left:3594px;top:291px;width:90px;height:90px;background:#2f2f2f;border-radius:16px;"></div>
<svg style="left:1614px;top:282px" width="2073" height="110" viewBox="1614 282 2073 110"><path d="M1689 318H1713L1704 327H1677z" fill="#0a93e0"/><path d="M1695 333H1719L1710 342H1683z" fill="#76c4ea"/><path d="M1701 348H1725L1716 357H1689z" fill="#eaeaea"/><rect x="1870.500" y="313.500" width="45" height="45" fill="none" stroke="#eaeaea" stroke-width="3"/><rect x="1875" y="318" width="36" height="6" fill="#0a990a"/><path d="M1889 331 1878 341 1889 351M1897 331 1908 341 1897 351" fill="none" stroke="#eaeaea" stroke-width="3.500"/><path d="M2129 324.500 2149 346M2149 324.500 2129 346" stroke="#0c0c0c" stroke-width="7" transform="translate(0,-1.500)"/><path d="M2129 325 2149 346M2149 325 2129 346" stroke="#9a9a9a" stroke-width="7"/><path d="M2266.500 348V313.500H2301" fill="none" stroke="#eaeaea" stroke-width="3"/><path d="M2286 336 2308 317Q2311.500 316 2311 319.500L2294 343z" fill="#eaeaea"/><path d="M2281 341 2284.500 337.500 2292 345 2288 348z" fill="#eaeaea"/><path d="M2265.500 357.500Q2271 350 2279 346.500L2282.500 350Q2280 357 2265.500 357.500z" fill="#0a93e0"/><path d="M2463 318.500H2499V330H2496Q2495 324 2488 324H2486.500V347Q2486.500 351 2492 351.500V354.500H2470V351.500Q2475.500 351 2475.500 347V324H2474Q2467 324 2466 330H2463z" fill="#eaeaea"/><path d="M2676 354H2658V318H2680.500L2688 325.500V345" fill="none" stroke="#eaeaea" stroke-width="6" stroke-linejoin="round"/><path d="M2670 346 2678.500 340 2691 357H2680.500z" fill="#eaeaea" stroke="#262626" stroke-width="3"/><path d="M2670 346 2678.500 340 2691 357H2680.500z" fill="#eaeaea"/><circle cx="2673" cy="339" r="9.300" fill="#eaeaea"/><circle cx="2667.500" cy="332.500" r="5.300" fill="#262626"/><path d="M2874 345V354H2844V315H2865.500L2874 323.500V333" fill="none" stroke="#eaeaea" stroke-width="6" stroke-linejoin="round"/><path d="M2862 313.500 2875.500 327H2862z" fill="#eaeaea"/><rect x="2862" y="336" width="19" height="6" fill="#0a990a"/><path d="M2880 330V347.600L2889 339z" fill="#0a990a"/><path d="M3620.5 322L3639.0 346 3657.5 322H3649.5L3639.0 336.3 3628.5 322z" fill="#0c0c0c" transform="translate(0,-2)"/><path d="M3620.5 322L3639.0 346 3657.5 322H3649.5L3639.0 336.3 3628.5 322z" fill="#8c8c8c"/></svg>
<span class="t" style="left:1930px;top:318.4px;font-size:35px;color:#ffffff;transform:scaleX(1.0126);">XML Editor</span>
<svg style="left:1614px;top:393px" width="2073" height="111" viewBox="1614 393 2073 111"><rect x="1648.5" y="424.500" width="45" height="45" fill="none" stroke="#eaeaea" stroke-width="3"/><path d="M1660 453 1652 459.5 1660 466M1667 453 1675 459.5 1667 466" fill="none" stroke="#8c8c8c" stroke-width="3"/><path d="M1678 459.5H1690M1684 453.5V465.5" stroke="#0a990a" stroke-width="3.500"/><text x="1654" y="445" font-size="19" fill="#eaeaea" class="dm" textLength="35" lengthAdjust="spacingAndGlyphs">xml</text><rect x="1756.5" y="424.500" width="45" height="45" fill="none" stroke="#eaeaea" stroke-width="3"/><path d="M1768 453 1760 459.5 1768 466M1775 453 1783 459.5 1775 466" fill="none" stroke="#8c8c8c" stroke-width="3"/><path d="M1786 459.5H1798M1792 453.5V465.5" stroke="#0a990a" stroke-width="3.500"/><text x="1762" y="445" font-size="19" fill="#eaeaea" class="dm" textLength="35" lengthAdjust="spacingAndGlyphs">abc</text><rect x="1864.5" y="424.500" width="33" height="33" fill="none" stroke="#eaeaea" stroke-width="3"/><rect x="1876.5" y="436.500" width="33" height="33" fill="#2d2d2d" stroke="#eaeaea" stroke-width="3"/><path d="M1890 440 1882 446.5 1890 453M1897 440 1905 446.5 1897 453" fill="none" stroke="#8c8c8c" stroke-width="2.5"/><path d="M1894 461H1906M1900 455V467" stroke="#0a990a" stroke-width="3.500"/><rect x="1972.5" y="424.500" width="45" height="45" fill="none" stroke="#eaeaea" stroke-width="3"/><path d="M1985 429 1977 435.5 1985 442M1992 429 2000 435.5 1992 442" fill="none" stroke="#8c8c8c" stroke-width="2.5"/><path d="M1996 447 2012 463M2012 447 1996 463" stroke="#ff1493" stroke-width="6"/><rect x="2085" y="432" width="15" height="6" fill="#555555"/><rect x="2085" y="444" width="18" height="6" fill="#555555"/><rect x="2100" y="456" width="21" height="6" fill="#808080"/><path d="M2121 432H2117L2108 441 2117 450H2121V446.500L2116 441 2121 435.500z" fill="#1c5c20"/><rect x="2211" y="432" width="15" height="6" fill="#8c8c8c"/><rect x="2211" y="444" width="18" height="6" fill="#8c8c8c"/><rect x="2193" y="456" width="21" height="6" fill="#eaeaea"/><path d="M2193 432H2197L2206 441 2197 450H2193V446.500L2198 441 2193 435.500z" fill="#0a990a"/><path d="M2301 459.5L2319.0 437 2337 459.5H2327.8L2319.0 446.2 2310.2 459.5z" fill="#eaeaea"/><path d="M2408.5 435L2426.75 457 2445 435H2435.8L2426.75 447.8 2417.7 435z" fill="#7a7a7a"/><rect x="3586.500" y="424.500" width="42" height="42" fill="none" stroke="#eaeaea" stroke-width="3"/><rect x="3591" y="429" width="33" height="15" fill="#eaeaea"/><rect x="3591" y="447" width="33" height="15" fill="#eaeaea"/><path d="M3639 438H3675L3657 456z" fill="#eaeaea"/></svg>
<div class="tree" style="left:1617px;top:504.5px;width:2061px;height:518px;background:#2d2d2d;border:3px solid #1c1c1c;"></div>
<div style="left:1620px;top:906px;width:2061px;height:57px;background:#15539e;"></div>
<span class="t" style="left:1690.5px;top:519.2px;font-size:35px;color:#8a8a8a;transform:scaleX(0.7823);">&lt;</span><span class="t" style="left:1710.5px;top:519.2px;font-size:35px;color:#6a9ff5;transform:scaleX(0.9363);">svg</span><span class="t" style="left:1775px;top:519.2px;font-size:35px;color:#f47c86;transform:scaleX(0.9725);">id</span><span class="t" style="left:1807.5px;top:519.2px;font-size:35px;color:#8a8a8a;transform:scaleX(0.8067);">=</span><span class="t" style="left:1830px;top:519.2px;font-size:35px;color:#f5d273;transform:scaleX(0.9543);">&quot;svg2993&quot;</span><span class="t" style="left:1987.5px;top:519.2px;font-size:35px;color:#8a8a8a;transform:scaleX(0.7823);">&gt;</span>
<span class="t" style="left:1745px;top:576.2px;font-size:35px;color:#8a8a8a;transform:scaleX(0.7823);">&lt;</span><span class="t" style="left:1765px;top:576.2px;font-size:35px;color:#6a9ff5;transform:scaleX(1.0216);">sodipodi:namedview</span><span class="t" style="left:2102px;top:576.2px;font-size:35px;color:#f47c86;transform:scaleX(0.9725);">id</span><span class="t" style="left:2134px;top:576.2px;font-size:35px;color:#8a8a8a;transform:scaleX(0.8067);">=</span><span class="t" style="left:2156.5px;top:576.2px;font-size:35px;color:#f5d273;transform:scaleX(0.9986);">&quot;namedview60&quot;</span><span class="t" style="left:2404px;top:576.2px;font-size:35px;color:#8a8a8a;transform:scaleX(0.8067);">&gt;</span>
<span class="t" style="left:1745px;top:633.2px;font-size:35px;color:#8a8a8a;transform:scaleX(0.7823);">&lt;</span><span class="t" style="left:1765px;top:633.2px;font-size:35px;color:#6a9ff5;transform:scaleX(0.9265);">desc</span><span class="t" style="left:1846.5px;top:633.2px;font-size:35px;color:#f47c86;transform:scaleX(0.9725);">id</span><span class="t" style="left:1879px;top:633.2px;font-size:35px;color:#8a8a8a;transform:scaleX(0.8067);">=</span><span class="t" style="left:1901.5px;top:633.2px;font-size:35px;color:#f5d273;transform:scaleX(0.9641);">&quot;desc1&quot;</span><span class="t" style="left:2023.5px;top:633.2px;font-size:35px;color:#8a8a8a;transform:scaleX(0.7578);">&gt;</span>
<span class="t" style="left:1745px;top:690.2px;font-size:35px;color:#8a8a8a;transform:scaleX(0.7823);">&lt;</span><span class="t" style="left:1765px;top:690.2px;font-size:35px;color:#6a9ff5;transform:scaleX(0.9523);">defs</span><span class="t" style="left:1841px;top:690.2px;font-size:35px;color:#f47c86;transform:scaleX(0.9541);">id</span><span class="t" style="left:1873px;top:690.2px;font-size:35px;color:#8a8a8a;transform:scaleX(0.8067);">=</span><span class="t" style="left:1895.5px;top:690.2px;font-size:35px;color:#f5d273;transform:scaleX(0.9697);">&quot;defs65&quot;</span><span class="t" style="left:2030px;top:690.2px;font-size:35px;color:#8a8a8a;transform:scaleX(0.7334);">&gt;</span>
<span class="t" style="left:1745px;top:747.2px;font-size:35px;color:#8a8a8a;transform:scaleX(0.7823);">&lt;</span><span class="t" style="left:1765px;top:747.2px;font-size:35px;color:#6a9ff5;transform:scaleX(0.8989);">g</span><span class="t" style="left:1796px;top:747.2px;font-size:35px;color:#f47c86;transform:scaleX(0.9541);">id</span><span class="t" style="left:1828px;top:747.2px;font-size:35px;color:#8a8a8a;transform:scaleX(0.8067);">=</span><span class="t" style="left:1850.5px;top:747.2px;font-size:35px;color:#f5d273;transform:scaleX(0.9730);">&quot;g16&quot;</span><span class="t" style="left:1940px;top:747.2px;font-size:35px;color:#8a8a8a;transform:scaleX(0.7334);">&gt;</span>
<span class="t" style="left:1745px;top:804.2px;font-size:35px;color:#8a8a8a;transform:scaleX(0.7823);">&lt;</span><span class="t" style="left:1765px;top:804.2px;font-size:35px;color:#6a9ff5;transform:scaleX(0.8989);">g</span><span class="t" style="left:1796px;top:804.2px;font-size:35px;color:#f47c86;transform:scaleX(0.9541);">id</span><span class="t" style="left:1828px;top:804.2px;font-size:35px;color:#8a8a8a;transform:scaleX(0.8067);">=</span><span class="t" style="left:1850.5px;top:804.2px;font-size:35px;color:#f5d273;transform:scaleX(0.9730);">&quot;g52&quot;</span><span class="t" style="left:1940px;top:804.2px;font-size:35px;color:#8a8a8a;transform:scaleX(0.7334);">&gt;</span>
<span class="t" style="left:1745px;top:861.2px;font-size:35px;color:#8a8a8a;transform:scaleX(0.7823);">&lt;</span><span class="t" style="left:1765px;top:861.2px;font-size:35px;color:#6a9ff5;transform:scaleX(0.8989);">g</span><span class="t" style="left:1796px;top:861.2px;font-size:35px;color:#f47c86;transform:scaleX(0.9541);">id</span><span class="t" style="left:1828px;top:861.2px;font-size:35px;color:#8a8a8a;transform:scaleX(0.8067);">=</span><span class="t" style="left:1850.5px;top:861.2px;font-size:35px;color:#f5d273;transform:scaleX(0.9730);">&quot;g60&quot;</span><span class="t" style="left:1940px;top:861.2px;font-size:35px;color:#8a8a8a;transform:scaleX(0.7334);">&gt;</span>
<span class="t" style="left:1745px;top:918.2px;font-size:35px;color:#ffffff;transform:scaleX(0.7823);">&lt;</span><span class="t" style="left:1765px;top:918.2px;font-size:35px;color:#ffffff;transform:scaleX(0.8989);">g</span><span class="t" style="left:1796px;top:918.2px;font-size:35px;color:#ffffff;transform:scaleX(0.9541);">id</span><span class="t" style="left:1828px;top:918.2px;font-size:35px;color:#ffffff;transform:scaleX(0.8067);">=</span><span class="t" style="left:1850.5px;top:918.2px;font-size:35px;color:#ffffff;transform:scaleX(1.0153);">&quot;breadboard&quot;</span><span class="t" style="left:2066px;top:918.2px;font-size:35px;color:#ffffff;transform:scaleX(0.7578);">&gt;</span>
<svg style="left:1632px;top:527.5px;" width="37" height="19" viewBox="0 0 37 19"><path d="M0.500 0.500H36.500L18.500 18.500z" fill="#c4c4c4"/></svg>
<svg style="left:1695px;top:632.5px;" width="19" height="36" viewBox="0 0 19 36"><path d="M0.500 0.500V35.500L18.500 18z" fill="#c4c4c4"/></svg>
<svg style="left:1695px;top:689.5px;" width="19" height="36" viewBox="0 0 19 36"><path d="M0.500 0.500V35.500L18.500 18z" fill="#c4c4c4"/></svg>
<svg style="left:1695px;top:746.5px;" width="19" height="36" viewBox="0 0 19 36"><path d="M0.500 0.500V35.500L18.500 18z" fill="#c4c4c4"/></svg>
<svg style="left:1695px;top:803.5px;" width="19" height="36" viewBox="0 0 19 36"><path d="M0.500 0.500V35.500L18.500 18z" fill="#c4c4c4"/></svg>
<svg style="left:1695px;top:860.5px;" width="19" height="36" viewBox="0 0 19 36"><path d="M0.500 0.500V35.500L18.500 18z" fill="#c4c4c4"/></svg>
<svg style="left:1695px;top:917.5px;" width="19" height="36" viewBox="0 0 19 36"><path d="M0.500 0.500V35.500L18.500 18z" fill="#b4c8e4"/></svg>
<div style="left:1617px;top:1032px;width:2067px;height:3px;background:#1f1f1f;"></div>
<div style="left:1617px;top:1035px;width:2067px;height:9.5px;background:#353535;"></div>
<div style="left:1617px;top:1044px;width:2067px;height:3px;background:#1f1f1f;"></div>
<div class="attrs" style="left:1617px;top:1050px;width:2061px;height:731px;background:#2d2d2d;border:3px solid #1c1c1c;"></div>
<div style="left:1620px;top:1125px;width:2061px;height:3px;background:#505050;"></div>
<div style="left:1704.5px;top:1052px;width:3px;height:73px;background:#505050;"></div>
<div style="left:1992px;top:1052px;width:3px;height:73px;background:#505050;"></div>
<svg style="left:1644px;top:1067px;" width="36" height="40" viewBox="0 0 36 40"><rect x="14.500" y="0.500" width="7" height="1.500" fill="#0c0c0c"/><rect x="0" y="15" width="14.500" height="1.500" fill="#0c0c0c"/><rect x="21.500" y="15" width="14.500" height="1.500" fill="#0c0c0c"/><rect x="0" y="16.500" width="36" height="7" fill="#eaeaea"/><rect x="14.500" y="2" width="7" height="36" fill="#eaeaea"/></svg>
<span class="t" style="left:1727px;top:1070.4px;font-size:35px;color:#8c8c8c;font-weight:bold;transform:scaleX(0.9913);">Name</span>
<span class="t" style="left:2014px;top:1070.4px;font-size:35px;color:#8c8c8c;font-weight:bold;transform:scaleX(0.9404);">Value</span>
<svg style="left:1644px;top:1139px;" width="36" height="46" viewBox="0 0 36 46"><path d="M11 5.500V3.500Q11 1.500 13 1.500H23Q25 1.500 25 3.500V5.500" fill="none" stroke="#fff" stroke-width="3"/><rect x="0" y="5.500" width="36" height="6.500" rx="2" fill="#fff"/><path d="M3 14H33L30.500 42Q30 45 27 45H9Q6 45 5.500 42z" fill="#fff"/><path d="M11.500 18 12.500 39M18 18V39M24.500 18 23.500 39" stroke="#2d2d2d" stroke-width="3"/></svg>
<span class="t" style="left:1721px;top:1146.4px;font-size:35px;color:#ffffff;transform:scaleX(0.9541);">id</span>
<div style="left:2007px;top:1137px;width:179.5px;height:47.5px;border:2.500px dashed #8a8a8a;border-radius:8px;"></div>
<span class="t" style="left:2009px;top:1146.4px;font-size:35px;color:#ffffff;transform:scaleX(0.9942);">breadboard</span>
<div class="ime" style="left:3399px;top:452px;width:150px;height:66px;background:#ffffff;border-bottom:3px solid #e0e0e0;height:63px;"></div>
<span class="t" style="left:3437px;top:465.5px;font-size:36px;color:#000000;transform:scaleX(0.8597);">EN</span>
<div style="left:3411.5px;top:455px;width:5px;height:5px;background:#c8c8c8;"></div>
<div style="left:3411.5px;top:467px;width:5px;height:5px;background:#c8c8c8;"></div>
<div style="left:3411.5px;top:479px;width:5px;height:5px;background:#c8c8c8;"></div>
<div style="left:3411.5px;top:491px;width:5px;height:5px;background:#c8c8c8;"></div>
<div style="left:3411.5px;top:503px;width:5px;height:5px;background:#c8c8c8;"></div>
<div style="left:3513px;top:461px;width:27px;height:13px;border:3px solid #9ab0d8;border-radius:6px;width:21px;height:7px;"></div>
<div style="left:3513px;top:494.5px;width:24px;height:11px;border:3.500px solid #3a4a9a;border-top:none;width:17px;height:7.500px;"></div>
</div>
<div class="commands-bar" style="left:0;top:0;width:0;height:0;">
<svg style="left:3687px;top:282px" width="152" height="1521" viewBox="3687 282 152 1521"><path d="M3747 318H3768L3777.500 327.500V351H3747z" fill="none" stroke="#eaeaea" stroke-width="6" stroke-linejoin="round"/><path d="M3765 316.500 3778.500 330.500H3765z" fill="#eaeaea"/><path d="M3783.500 306 3786 312.500 3793 313 3787.500 317.500 3789.500 324.500 3783.500 320.500 3777.500 324.500 3779.500 317.500 3774 313 3781 312.500z" fill="#0a990a"/><path d="M3744 423Q3744 420 3747 420H3759Q3762 420 3762 423V429H3783Q3786 429 3786 432V438H3758Q3753 438 3752 442L3748 459H3744z" fill="#eaeaea"/><path d="M3756 441H3792.500L3788.500 459Q3788 462 3785 462H3744Q3748 462 3749 459L3753 443.500Q3753.500 441 3756 441z" fill="#eaeaea"/><rect x="3765" y="528" width="6" height="18" fill="#0a990a"/><path d="M3756.500 543.500H3779.500L3768 556z" fill="#0a990a"/><path d="M3756 552 3747.500 562V576H3789.500V562L3781 552H3777L3783.500 561.500H3752.500L3759.500 552z" fill="#eaeaea"/><path d="M3760.500 567V569.500H3776V567" fill="none" stroke="#353535" stroke-width="3"/><rect x="3756" y="642" width="24" height="6" fill="#eaeaea"/><rect x="3746.500" y="651" width="42.500" height="18" rx="4" fill="#c0c0c0"/><rect x="3753" y="660" width="30" height="24" fill="#353535"/><rect x="3756" y="663" width="24" height="18" fill="#eaeaea"/><rect x="3714" y="724" width="108" height="2" fill="#2e2e2e"/><rect x="3714" y="958" width="108" height="2" fill="#2e2e2e"/><rect x="3714" y="1192" width="108" height="2" fill="#2e2e2e"/><rect x="3714" y="1537" width="108" height="2" fill="#2e2e2e"/><rect x="3714" y="1660" width="108" height="2" fill="#2e2e2e"/><path d="M3756 774V765H3777L3786 774V804H3756V795" fill="none" stroke="#eaeaea" stroke-width="6" stroke-linejoin="round"/><path d="M3774 763.500 3787.500 777.500H3774z" fill="#eaeaea"/><rect x="3747" y="782" width="18" height="6" fill="#0a990a"/><path d="M3764 775.500V794.500L3774 785z" fill="#0a990a"/><path d="M3777 891V885L3768 876H3747V915H3777V909" fill="none" stroke="#eaeaea" stroke-width="6" stroke-linejoin="round"/><path d="M3765 874.500 3778.500 888.500H3765z" fill="#eaeaea"/><rect x="3765" y="896" width="18" height="6" fill="#0a990a"/><path d="M3782 889.500V908.500L3792 899z" fill="#0a990a"/><path d="M3747 1014 3759 1002V1011H3774A12 12 0 0 1 3774 1035V1029A6 6 0 0 0 3774 1017.500H3759V1026z" fill="#eaeaea"/><path d="M3789 1125 3777 1113V1122H3762A12 12 0 0 0 3762 1146V1140A6 6 0 0 1 3762 1128.500H3777V1137z" fill="#8c8c8c"/><rect x="3744" y="1230" width="33" height="33" fill="#eaeaea"/><rect x="3756" y="1245" width="39" height="36" fill="#353535"/><rect x="3759" y="1248" width="33" height="30" fill="#eaeaea"/><path d="M3753.500 1344 3779 1379M3782.500 1344 3757 1379" stroke="#eaeaea" stroke-width="6.500" stroke-linecap="round"/><circle cx="3754" cy="1379" r="7" fill="#353535" stroke="#eaeaea" stroke-width="6"/><circle cx="3782" cy="1379" r="7" fill="#353535" stroke="#eaeaea" stroke-width="6"/><path d="M3756 1458.500H3745.500V1498.500H3784.500V1458.500H3774" fill="none" stroke="#eaeaea" stroke-width="3"/><rect x="3756" y="1455" width="18" height="9" rx="2" fill="#eaeaea"/><path d="M3753 1467H3777V1485L3768 1494H3753z" fill="#eaeaea"/></svg>
<div class="btn" style="left:3714.5px;top:1548px;width:101.5px;height:95px;background:linear-gradient(#373737,#303030);border:3px solid #1c1c1c;border-bottom-color:#0e0e0e;border-radius:15px;"><svg style="left:32.5px;top:38px;" width="38" height="22" viewBox="0 0 38 22"><path d="M1 1.500H37" stroke="#0c0c0c" stroke-width="1.500"/><path d="M1 2.500H37L19 21z" fill="#eaeaea"/></svg></div>
</div>
<div class="palette-bar" style="left:0;top:0;width:0;height:0;">
<div class="palette" style="left:0px;top:1809px;width:3839px;height:99px;"><div style="left:3px;top:0px;width:99px;height:99px;background:#ffffff;"><svg style="left:0px;top:0px;" width="99" height="99" viewBox="0 0 99 99"><path d="M10 10 89 89M89 10 10 89" stroke="#c01c3c" stroke-width="8" stroke-linecap="round" opacity=".95"/></svg></div><div style="left:105px;top:0px;width:93px;height:93px;background:#000000;border:3px solid #0e0e0e;"></div><div style="left:207px;top:0px;width:93px;height:93px;background:#808080;border:3px solid #787878;"></div><div style="left:309px;top:0px;width:99px;height:99px;background:#ffffff;"></div><div style="left:411px;top:0px;width:51px;height:42px;background:#1a1a1a;border:3px solid #2e2e2e;"></div><div style="left:471px;top:0px;width:51px;height:42px;background:#333333;border:3px solid #454545;"></div><div style="left:531px;top:0px;width:51px;height:42px;background:#4d4d4d;border:3px solid #474747;"></div><div style="left:591px;top:0px;width:51px;height:42px;background:#666666;border:3px solid #5e5e5e;"></div><div style="left:651px;top:0px;width:51px;height:42px;background:#999999;border:3px solid #8e8e8e;"></div><div style="left:711px;top:0px;width:51px;height:42px;background:#b3b3b3;border:3px solid #a6a6a6;"></div><div style="left:771px;top:0px;width:51px;height:42px;background:#cccccc;border:3px solid #bdbdbd;"></div><div style="left:831px;top:0px;width:51px;height:42px;background:#e6e6e6;border:3px solid #d5d5d5;"></div><div style="left:891px;top:0px;width:51px;height:42px;background:#ececec;border:3px solid #dbdbdb;"></div><div style="left:951px;top:0px;width:51px;height:42px;background:#f2f2f2;border:3px solid #e1e1e1;"></div><div style="left:1011px;top:0px;width:51px;height:42px;background:#f9f9f9;border:3px solid #e7e7e7;"></div><div style="left:1071px;top:0px;width:51px;height:42px;background:#800000;border:3px solid #8b1616;"></div><div style="left:1131px;top:0px;width:51px;height:42px;background:#ff0000;border:3px solid #ed0000;"></div><div style="left:1191px;top:0px;width:51px;height:42px;background:#808000;border:3px solid #777700;"></div><div style="left:1251px;top:0px;width:51px;height:42px;background:#ffff00;border:3px solid #eded00;"></div><div style="left:1311px;top:0px;width:51px;height:42px;background:#008000;border:3px solid #007700;"></div><div style="left:1371px;top:0px;width:51px;height:42px;background:#00ff00;border:3px solid #00ed00;"></div><div style="left:1431px;top:0px;width:51px;height:42px;background:#008080;border:3px solid #007777;"></div><div style="left:1491px;top:0px;width:51px;height:42px;background:#00ffff;border:3px solid #00eded;"></div><div style="left:1551px;top:0px;width:51px;height:42px;background:#000080;border:3px solid #16168b;"></div><div style="left:1611px;top:0px;width:51px;height:42px;background:#0000ff;border:3px solid #1616ff;"></div><div style="left:1671px;top:0px;width:51px;height:42px;background:#800080;border:3px solid #8b168b;"></div><div style="left:1731px;top:0px;width:51px;height:42px;background:#ff00ff;border:3px solid #ed00ed;"></div><div style="left:1791px;top:0px;width:51px;height:42px;background:#2b0000;border:3px solid #3e1616;"></div><div style="left:1851px;top:0px;width:51px;height:42px;background:#550000;border:3px solid #641616;"></div><div style="left:1911px;top:0px;width:51px;height:42px;background:#800000;border:3px solid #8b1616;"></div><div style="left:1971px;top:0px;width:51px;height:42px;background:#aa0000;border:3px solid #b11616;"></div><div style="left:2031px;top:0px;width:51px;height:42px;background:#d40000;border:3px solid #c50000;"></div><div style="left:2091px;top:0px;width:51px;height:42px;background:#ff0000;border:3px solid #ed0000;"></div><div style="left:2151px;top:0px;width:51px;height:42px;background:#ff2a2a;border:3px solid #ed2727;"></div><div style="left:2211px;top:0px;width:51px;height:42px;background:#ff5555;border:3px solid #ed4f4f;"></div><div style="left:2271px;top:0px;width:51px;height:42px;background:#ff8080;border:3px solid #ed7777;"></div><div style="left:2331px;top:0px;width:51px;height:42px;background:#ffaaaa;border:3px solid #ed9e9e;"></div><div style="left:2391px;top:0px;width:51px;height:42px;background:#ffd5d5;border:3px solid #edc6c6;"></div><div style="left:2451px;top:0px;width:51px;height:42px;background:#280b0b;border:3px solid #3b2020;"></div><div style="left:2511px;top:0px;width:51px;height:42px;background:#501616;border:3px solid #5f2a2a;"></div><div style="left:2571px;top:0px;width:51px;height:42px;background:#782121;border:3px solid #843434;"></div><div style="left:2631px;top:0px;width:51px;height:42px;background:#a02c2c;border:3px solid #942828;"></div><div style="left:2691px;top:0px;width:51px;height:42px;background:#c83737;border:3px solid #ba3333;"></div><div style="left:2751px;top:0px;width:51px;height:42px;background:#d35f5f;border:3px solid #c45858;"></div><div style="left:2811px;top:0px;width:51px;height:42px;background:#de8787;border:3px solid #ce7d7d;"></div><div style="left:2871px;top:0px;width:51px;height:42px;background:#e9afaf;border:3px solid #d8a2a2;"></div><div style="left:2931px;top:0px;width:51px;height:42px;background:#f4d7d7;border:3px solid #e2c7c7;"></div><div style="left:2991px;top:0px;width:51px;height:42px;background:#241c1c;border:3px solid #373030;"></div><div style="left:3051px;top:0px;width:51px;height:42px;background:#483737;border:3px solid #423333;"></div><div style="left:3111px;top:0px;width:51px;height:42px;background:#6c5353;border:3px solid #644d4d;"></div><div style="left:3171px;top:0px;width:51px;height:42px;background:#916f6f;border:3px solid #866767;"></div><div style="left:3231px;top:0px;width:51px;height:42px;background:#ac9393;border:3px solid #9f8888;"></div><div style="left:3291px;top:0px;width:51px;height:42px;background:#c8b7b7;border:3px solid #baaaaa;"></div><div style="left:3351px;top:0px;width:51px;height:42px;background:#e3dbdb;border:3px solid #d3cbcb;"></div><div style="left:3411px;top:0px;width:51px;height:42px;background:#2b1100;border:3px solid #3e2616;"></div><div style="left:3471px;top:0px;width:48px;height:42px;background:#552200;border:3px solid #643516;"></div><div style="left:3528px;top:0px;width:48px;height:42px;background:#803300;border:3px solid #772f00;"></div><div style="left:3585px;top:0px;width:48px;height:42px;background:#aa4400;border:3px solid #9e3f00;"></div><div style="left:411px;top:51px;width:51px;height:42px;background:#d45500;border:3px solid #c54f00;"></div><div style="left:471px;top:51px;width:51px;height:42px;background:#ff6600;border:3px solid #ed5e00;"></div><div style="left:531px;top:51px;width:51px;height:42px;background:#ff7f2a;border:3px solid #ed7627;"></div><div style="left:591px;top:51px;width:51px;height:42px;background:#ff9955;border:3px solid #ed8e4f;"></div><div style="left:651px;top:51px;width:51px;height:42px;background:#ffb380;border:3px solid #eda677;"></div><div style="left:711px;top:51px;width:51px;height:42px;background:#ffccaa;border:3px solid #edbd9e;"></div><div style="left:771px;top:51px;width:51px;height:42px;background:#ffe6d5;border:3px solid #edd5c6;"></div><div style="left:831px;top:51px;width:51px;height:42px;background:#28170b;border:3px solid #3b2b20;"></div><div style="left:891px;top:51px;width:51px;height:42px;background:#502d16;border:3px solid #5f3f2a;"></div><div style="left:951px;top:51px;width:51px;height:42px;background:#784421;border:3px solid #6f3f1e;"></div><div style="left:1011px;top:51px;width:51px;height:42px;background:#a05a2c;border:3px solid #945328;"></div><div style="left:1071px;top:51px;width:51px;height:42px;background:#c87137;border:3px solid #ba6933;"></div><div style="left:1131px;top:51px;width:51px;height:42px;background:#d38d5f;border:3px solid #c48358;"></div><div style="left:1191px;top:51px;width:51px;height:42px;background:#deaa87;border:3px solid #ce9e7d;"></div><div style="left:1251px;top:51px;width:51px;height:42px;background:#e9c6af;border:3px solid #d8b8a2;"></div><div style="left:1311px;top:51px;width:51px;height:42px;background:#f4e3d7;border:3px solid #e2d3c7;"></div><div style="left:1371px;top:51px;width:51px;height:42px;background:#241f1c;border:3px solid #373330;"></div><div style="left:1431px;top:51px;width:51px;height:42px;background:#483e37;border:3px solid #423933;"></div><div style="left:1491px;top:51px;width:51px;height:42px;background:#6c5d53;border:3px solid #64564d;"></div><div style="left:1551px;top:51px;width:51px;height:42px;background:#917c6f;border:3px solid #867367;"></div><div style="left:1611px;top:51px;width:51px;height:42px;background:#ac9d93;border:3px solid #9f9288;"></div><div style="left:1671px;top:51px;width:51px;height:42px;background:#c8beb7;border:3px solid #bab0aa;"></div><div style="left:1731px;top:51px;width:51px;height:42px;background:#e3dedb;border:3px solid #d3cecb;"></div><div style="left:1791px;top:51px;width:51px;height:42px;background:#2b2200;border:3px solid #3e3516;"></div><div style="left:1851px;top:51px;width:51px;height:42px;background:#554400;border:3px solid #4f3f00;"></div><div style="left:1911px;top:51px;width:51px;height:42px;background:#806600;border:3px solid #775e00;"></div><div style="left:1971px;top:51px;width:51px;height:42px;background:#aa8800;border:3px solid #9e7e00;"></div><div style="left:2031px;top:51px;width:51px;height:42px;background:#d4aa00;border:3px solid #c59e00;"></div><div style="left:2091px;top:51px;width:51px;height:42px;background:#ffcc00;border:3px solid #edbd00;"></div><div style="left:2151px;top:51px;width:51px;height:42px;background:#ffd42a;border:3px solid #edc527;"></div><div style="left:2211px;top:51px;width:51px;height:42px;background:#ffdd55;border:3px solid #edcd4f;"></div><div style="left:2271px;top:51px;width:51px;height:42px;background:#ffe680;border:3px solid #edd577;"></div><div style="left:2331px;top:51px;width:51px;height:42px;background:#ffeeaa;border:3px solid #eddd9e;"></div><div style="left:2391px;top:51px;width:51px;height:42px;background:#fff6d5;border:3px solid #ede4c6;"></div><div style="left:2451px;top:51px;width:51px;height:42px;background:#28220b;border:3px solid #3b3520;"></div><div style="left:2511px;top:51px;width:51px;height:42px;background:#504416;border:3px solid #4a3f14;"></div><div style="left:2571px;top:51px;width:51px;height:42px;background:#786721;border:3px solid #6f5f1e;"></div><div style="left:2631px;top:51px;width:51px;height:42px;background:#a0892c;border:3px solid #947f28;"></div><div style="left:2691px;top:51px;width:51px;height:42px;background:#c8ab37;border:3px solid #ba9f33;"></div><div style="left:2751px;top:51px;width:51px;height:42px;background:#d3bc5f;border:3px solid #c4ae58;"></div><div style="left:2811px;top:51px;width:51px;height:42px;background:#decd87;border:3px solid #cebe7d;"></div><div style="left:2871px;top:51px;width:51px;height:42px;background:#e9ddaf;border:3px solid #d8cda2;"></div><div style="left:2931px;top:51px;width:51px;height:42px;background:#f4eed7;border:3px solid #e2ddc7;"></div><div style="left:2991px;top:51px;width:51px;height:42px;background:#24221c;border:3px solid #373530;"></div><div style="left:3051px;top:51px;width:51px;height:42px;background:#484537;border:3px solid #424033;"></div><div style="left:3111px;top:51px;width:51px;height:42px;background:#6c6753;border:3px solid #645f4d;"></div><div style="left:3171px;top:51px;width:51px;height:42px;background:#918a6f;border:3px solid #868067;"></div><div style="left:3231px;top:51px;width:51px;height:42px;background:#aca793;border:3px solid #9f9b88;"></div><div style="left:3291px;top:51px;width:51px;height:42px;background:#c8c4b7;border:3px solid #bab6aa;"></div><div style="left:3351px;top:51px;width:51px;height:42px;background:#e3e2db;border:3px solid #d3d2cb;"></div><div style="left:3411px;top:51px;width:51px;height:42px;background:#222b00;border:3px solid #353e16;"></div><div style="left:3471px;top:51px;width:48px;height:42px;background:#445500;border:3px solid #3f4f00;"></div><div style="left:3528px;top:51px;width:48px;height:42px;background:#668000;border:3px solid #5e7700;"></div><div style="left:3585px;top:51px;width:48px;height:42px;background:#88aa00;border:3px solid #7e9e00;"></div></div>
<svg style="left:3645px;top:1809px" width="194" height="99" viewBox="3645 1809 194 99"><path d="M3654 1869L3672.0 1847 3690 1869H3680.8L3672.0 1856.2 3663.2 1869z" fill="#8c8c8c"/><path d="M3722.5 1845L3740.75 1867 3759 1845H3749.8L3740.75 1857.8 3731.7 1845z" fill="#eaeaea"/><rect x="3786" y="1851" width="42" height="6" fill="#eaeaea"/><rect x="3786" y="1866" width="42" height="6" fill="#eaeaea"/><rect x="3786" y="1881" width="42" height="6" fill="#eaeaea"/></svg>
</div>
<div class="statusbar" style="left:0;top:0;width:0;height:0;">
<span class="t" style="left:55.5px;top:1922.9px;font-size:35px;color:#eeeeec;transform:scaleX(0.9277);">Fill:</span>
<span class="t" style="left:2px;top:1972.9px;font-size:35px;color:#eeeeec;transform:scaleX(0.9379);">Stroke:</span>
<span class="t" style="left:197px;top:1922.9px;font-size:35px;color:#eeeeec;font-weight:bold;transform:scaleX(0.9563);">Unset</span>
<span class="t" style="left:197px;top:1972.9px;font-size:35px;color:#eeeeec;font-weight:bold;transform:scaleX(0.9563);">Unset</span>
<span class="t" style="left:346px;top:1972.9px;font-size:35px;color:#eeeeec;transform:scaleX(0.9154);">0.0254</span>
<span class="t" style="left:469px;top:1946.4px;font-size:35px;color:#eeeeec;transform:scaleX(0.8795);">O:</span>
<div class="spin" style="left:522.5px;top:1915px;width:209px;height:96px;background:#2d2d2d;border:3px solid #1d1d1d;border-radius:15px;overflow:hidden;"><span class="t" style="left:21.0px;top:28.9px;font-size:35px;color:#ffffff;transform:scaleX(0.8732);">100</span><div style="left:108px;top:0px;width:2px;height:96px;background:#282828;"></div><div style="left:159px;top:0px;width:2px;height:96px;background:#282828;"></div><div style="left:116.5px;top:41.5px;width:36px;height:1.5px;background:#0c0c0c;"></div><div style="left:116.5px;top:43.0px;width:36px;height:7px;background:#deddda;"></div><div style="left:181.5px;top:26.5px;width:7px;height:1.5px;background:transparent;"></div><div style="left:167px;top:41.5px;width:14.5px;height:1.5px;background:transparent;"></div><div style="left:188.5px;top:41.5px;width:14.5px;height:1.5px;background:transparent;"></div><div style="left:167px;top:43.0px;width:36px;height:7px;background:#5c5c5c;"></div><div style="left:181.5px;top:28.0px;width:7px;height:37px;background:#5c5c5c;"></div></div>
<div style="left:783px;top:1940px;width:9px;height:49px;background:#f4f4f4;"></div>
<span class="t" style="left:811px;top:1948.9px;font-size:35px;color:#eeeeec;font-style:italic;transform:scaleX(1.0155);">[root]</span>
<svg style="left:956px;top:1943px;" width="44" height="42" viewBox="0 0 44 42"><ellipse cx="22" cy="27" rx="18" ry="10" fill="none" stroke="#8c8c8c" stroke-width="6"/><circle cx="22" cy="26" r="5.500" fill="#8c8c8c"/><path d="M22 4V12M8.500 8.500 12 14M35.500 8.500 32 14" stroke="#8c8c8c" stroke-width="5" stroke-linecap="round"/></svg>
<svg style="left:1071px;top:1943px;" width="42" height="44" viewBox="0 0 42 44"><path d="M21 22V12A8.500 8.500 0 0 1 38 12V16" fill="none" stroke="#8c8c8c" stroke-width="5.500"/><rect x="0" y="20" width="30" height="23" fill="#8c8c8c"/></svg>
<div style="left:1144px;top:1932px;width:2px;height:66px;background:#2e2e2e;"></div>
<span class="t" style="left:1165px;top:1946.9px;font-size:35px;color:#eeeeec;font-weight:bold;transform:scaleX(0.9859);">Group</span>
<span class="t" style="left:1279.5px;top:1946.9px;font-size:35px;color:#eeeeec;transform:scaleX(1.0444);">of</span>
<span class="t" style="left:1323px;top:1946.9px;font-size:35px;color:#eeeeec;font-weight:bold;transform:scaleX(0.9459);">11</span>
<span class="t" style="left:1372px;top:1946.9px;font-size:35px;color:#eeeeec;transform:scaleX(1.0247);">objects in root. Click selection again to toggle scale/rotation handles.</span>
<div style="left:2998px;top:1932px;width:2px;height:66px;background:#2e2e2e;"></div>
<svg style="left:2718px;top:1947px;" width="19" height="36" viewBox="0 0 19 36"><path d="M18.500 0.500V35.500L0.500 18z" fill="#8c8c8c"/></svg>
<div class="btn" style="left:2782px;top:1915px;width:101px;height:100px;background:linear-gradient(#373737,#303030);border:3px solid #1c1c1c;border-radius:15px;"><svg style="left:32px;top:38px;" width="37" height="20" viewBox="0 0 37 20"><path d="M0.500 0.500H36.500L18.500 19.500z" fill="#8c8c8c"/></svg></div>
<svg style="left:2933px;top:1947px;" width="19" height="36" viewBox="0 0 19 36"><path d="M0.500 0.500V35.500L18.500 18z" fill="#8c8c8c"/></svg>
<span class="t" style="left:3018px;top:1922.9px;font-size:35px;color:#eeeeec;transform:scaleX(0.8616);">X:</span>
<span class="t" style="left:3097.5px;top:1922.9px;font-size:35px;color:#eeeeec;transform:scaleX(0.9651);">-7.98</span>
<span class="t" style="left:3018px;top:1973.4px;font-size:35px;color:#eeeeec;transform:scaleX(0.9152);">Y:</span>
<span class="t" style="left:3097.5px;top:1973.4px;font-size:35px;color:#eeeeec;transform:scaleX(0.9651);">-1.72</span>
<span class="t" style="left:3210.5px;top:1947.4px;font-size:35px;color:#eeeeec;transform:scaleX(0.8840);">Z:</span>
<div class="spin" style="left:3252.5px;top:1915px;width:227px;height:96px;background:#2d2d2d;border:3px solid #1d1d1d;border-radius:15px;overflow:hidden;"><span class="t" style="left:27.5px;top:28.9px;font-size:35px;color:#ffffff;transform:scaleX(0.9103);">262%</span><div style="left:126px;top:0px;width:2px;height:96px;background:#282828;"></div><div style="left:177px;top:0px;width:2px;height:96px;background:#282828;"></div><div style="left:134.5px;top:41.5px;width:36px;height:1.5px;background:#0c0c0c;"></div><div style="left:134.5px;top:43.0px;width:36px;height:7px;background:#deddda;"></div><div style="left:199.5px;top:26.5px;width:7px;height:1.5px;background:#0c0c0c;"></div><div style="left:185px;top:41.5px;width:14.5px;height:1.5px;background:#0c0c0c;"></div><div style="left:206.5px;top:41.5px;width:14.5px;height:1.5px;background:#0c0c0c;"></div><div style="left:185px;top:43.0px;width:36px;height:7px;background:#deddda;"></div><div style="left:199.5px;top:28.0px;width:7px;height:37px;background:#deddda;"></div></div>
<span class="t" style="left:3518.5px;top:1947.4px;font-size:35px;color:#eeeeec;transform:scaleX(0.7143);">R:</span>
<div class="spin" style="left:3558.5px;top:1915px;width:245px;height:96px;background:#2d2d2d;border:3px solid #1d1d1d;border-radius:15px;overflow:hidden;"><span class="t" style="left:45.0px;top:28.9px;font-size:35px;color:#ffffff;transform:scaleX(0.9132);">0.00°</span><div style="left:144px;top:0px;width:2px;height:96px;background:#282828;"></div><div style="left:195px;top:0px;width:2px;height:96px;background:#282828;"></div><div style="left:152.5px;top:41.5px;width:36px;height:1.5px;background:#0c0c0c;"></div><div style="left:152.5px;top:43.0px;width:36px;height:7px;background:#deddda;"></div><div style="left:217.5px;top:26.5px;width:7px;height:1.5px;background:#0c0c0c;"></div><div style="left:203px;top:41.5px;width:14.5px;height:1.5px;background:#0c0c0c;"></div><div style="left:224.5px;top:41.5px;width:14.5px;height:1.5px;background:#0c0c0c;"></div><div style="left:203px;top:43.0px;width:36px;height:7px;background:#deddda;"></div><div style="left:217.5px;top:28.0px;width:7px;height:37px;background:#deddda;"></div></div>
</div>
</div>
</body></html>
